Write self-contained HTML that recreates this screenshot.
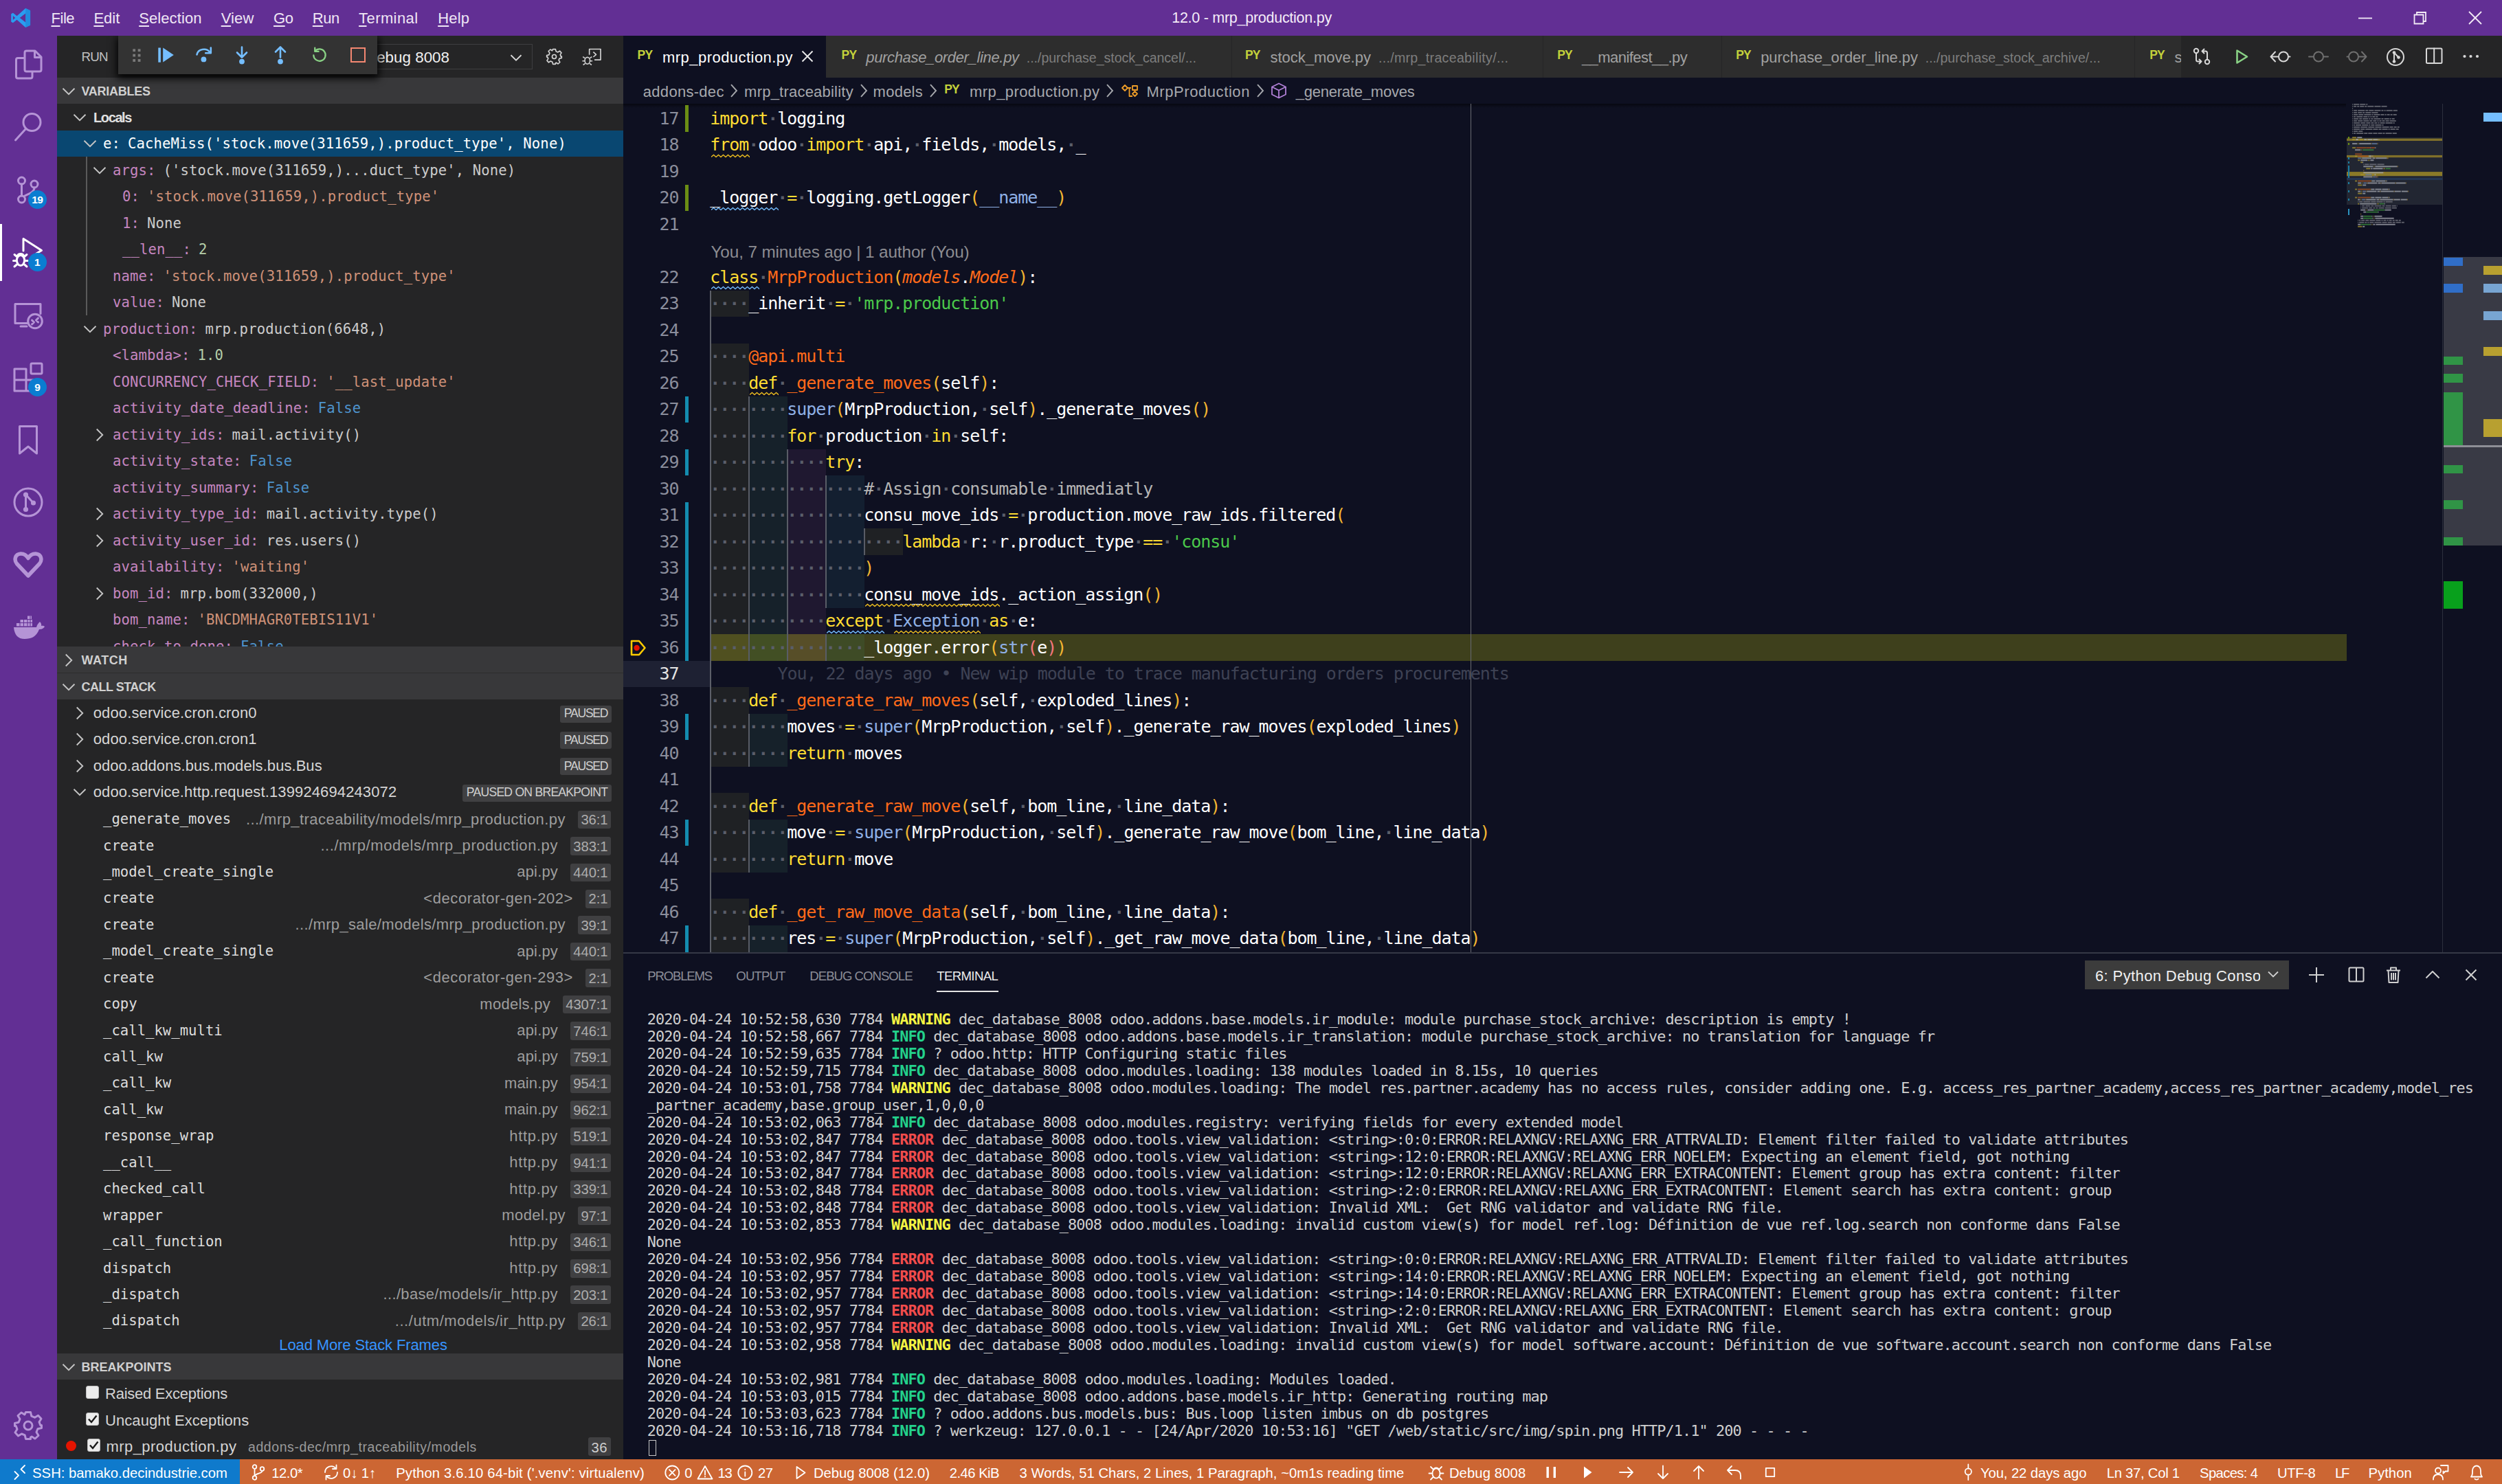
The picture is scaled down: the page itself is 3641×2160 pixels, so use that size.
<!DOCTYPE html>
<html lang="en"><head><meta charset="utf-8"><title>12.0 - mrp_production.py</title>
<style>
html,body{margin:0;padding:0;background:#0e1021;}
body{width:3641px;height:2160px;position:relative;overflow:hidden;font-family:"Liberation Sans",sans-serif;}
body div,body svg{position:absolute;box-sizing:border-box;}
div span{position:static;}
.cl{left:1033.2px;height:38px;line-height:38px;font-family:'DejaVu Sans Mono', 'Liberation Mono', monospace;font-size:25.0px;letter-spacing:-1.050px;white-space:pre;color:#fff;}
.k{color:#ffdd33}.f{color:#ff6a1a}.c{color:#ff6a1a;font-style:italic}.s{color:#4bc94b}.m{color:#b4b4b4}.b{color:#8fb0e6}.p1{color:#f2b632}.p2{color:#f4777f}.ws{color:#5a5e6a;font-weight:bold}.bl{color:#3e4254}
.ln{left:927px;width:60.5px;text-align:right;height:38px;line-height:38px;font-family:'DejaVu Sans Mono', 'Liberation Mono', monospace;font-size:25.0px;letter-spacing:-1.050px;color:#8b8e9c;white-space:pre;}
.tl{left:941.8px;height:25px;line-height:25px;font-family:'DejaVu Sans Mono', 'Liberation Mono', monospace;font-size:21.9px;letter-spacing:-0.934px;white-space:pre;color:#cfcfcf;}
.tw{color:#f5f543;font-weight:bold}.ti{color:#23d18b;font-weight:bold}.te{color:#f14c4c;font-weight:bold}
</style></head><body>
<div style="left:0px;top:0px;width:3641px;height:2160px;background:#0e1021;"></div>
<div style="left:0px;top:0px;width:3641px;height:52px;background:#622f94;"></div>
<div style="left:0px;top:52px;width:83px;height:2072px;background:#622f94;"></div>
<div style="left:83px;top:52px;width:824px;height:2072px;background:#252526;"></div>
<div style="left:907px;top:52px;width:2734px;height:61px;background:#252526;"></div>
<div style="left:0px;top:2124px;width:3641px;height:36px;background:#cc6633;"></div>
<div style="left:0px;top:2124px;width:348.6px;height:36px;background:#0f7acc;"></div>
<svg style="left:15px;top:11px;" width="30" height="30" viewBox="0 0 100 100"><path d="M74 3 L97 14 V86 L74 97 L32 59 L13 74 L4 69 V31 L13 26 L32 41 Z M74 28 L46 50 L74 72 Z M13 40 V60 L24 50 Z" fill="#2a9df0" fill-rule="evenodd"/><path d="M74 3 L97 14 V86 L74 97 Z" fill="#1a84d6" opacity="0.6"/></svg>
<div style="left:74.5px;top:10.88px;height:31px;line-height:31px;font-family:'Liberation Sans', sans-serif;font-size:22px;color:#efe6f5;white-space:pre;letter-spacing:-0.463px;"><span style="text-decoration:underline;text-underline-offset:3px;text-decoration-thickness:1.5px">F</span>ile</div>
<div style="left:136.4px;top:10.88px;height:31px;line-height:31px;font-family:'Liberation Sans', sans-serif;font-size:22px;color:#efe6f5;white-space:pre;letter-spacing:-0.005px;"><span style="text-decoration:underline;text-underline-offset:3px;text-decoration-thickness:1.5px">E</span>dit</div>
<div style="left:202.2px;top:10.88px;height:31px;line-height:31px;font-family:'Liberation Sans', sans-serif;font-size:22px;color:#efe6f5;white-space:pre;letter-spacing:0.098px;"><span style="text-decoration:underline;text-underline-offset:3px;text-decoration-thickness:1.5px">S</span>election</div>
<div style="left:321.7px;top:10.88px;height:31px;line-height:31px;font-family:'Liberation Sans', sans-serif;font-size:22px;color:#efe6f5;white-space:pre;letter-spacing:0.126px;"><span style="text-decoration:underline;text-underline-offset:3px;text-decoration-thickness:1.5px">V</span>iew</div>
<div style="left:398px;top:10.88px;height:31px;line-height:31px;font-family:'Liberation Sans', sans-serif;font-size:22px;color:#efe6f5;white-space:pre;letter-spacing:-0.430px;"><span style="text-decoration:underline;text-underline-offset:3px;text-decoration-thickness:1.5px">G</span>o</div>
<div style="left:454.8px;top:10.88px;height:31px;line-height:31px;font-family:'Liberation Sans', sans-serif;font-size:22px;color:#efe6f5;white-space:pre;letter-spacing:-0.453px;"><span style="text-decoration:underline;text-underline-offset:3px;text-decoration-thickness:1.5px">R</span>un</div>
<div style="left:522.1px;top:10.88px;height:31px;line-height:31px;font-family:'Liberation Sans', sans-serif;font-size:22px;color:#efe6f5;white-space:pre;letter-spacing:0.407px;"><span style="text-decoration:underline;text-underline-offset:3px;text-decoration-thickness:1.5px">T</span>erminal</div>
<div style="left:637.2px;top:10.88px;height:31px;line-height:31px;font-family:'Liberation Sans', sans-serif;font-size:22px;color:#efe6f5;white-space:pre;letter-spacing:0.188px;"><span style="text-decoration:underline;text-underline-offset:3px;text-decoration-thickness:1.5px">H</span>elp</div>
<div style="left:1705.2px;top:11.15px;height:30px;line-height:30px;font-family:'Liberation Sans', sans-serif;font-size:21.5px;color:#f4ecf8;white-space:pre;letter-spacing:-0.264px;">12.0 - mrp_production.py</div>
<svg style="left:3426px;top:10px;" width="32" height="32" viewBox="0 0 32 32"><path d="M6 16.5 H26" stroke="#f2eaf6" stroke-width="1.8" fill="none"/></svg>
<svg style="left:3506px;top:10px;" width="32" height="32" viewBox="0 0 32 32"><path d="M7.5 11.5 H20.5 V24.5 H7.5 Z M11 11.5 V8 H24 V21 H20.5" stroke="#f2eaf6" stroke-width="1.8" fill="none"/></svg>
<svg style="left:3586px;top:10px;" width="32" height="32" viewBox="0 0 32 32"><path d="M7 7 L25 25 M25 7 L7 25" stroke="#f2eaf6" stroke-width="1.8" fill="none"/></svg>
<svg style="left:19.5px;top:71px;" width="43" height="46" viewBox="0 0 43 46"><path d="M18.5 3 H31 L40 12 V30.5 Q40 33 37.5 33 H18.5 Q16 33 16 30.5 V5.5 Q16 3 18.5 3 Z M30.5 3.5 V12.5 H39.5" stroke="#b594d6" fill="none" stroke-width="3" stroke-linejoin="round" stroke-linecap="round"/><path d="M15.5 13.5 H6 Q3.5 13.5 3.5 16 V40.5 Q3.5 43 6 43 H24.5 Q27 43 27 40.5 V34" stroke="#b594d6" fill="none" stroke-width="3" stroke-linejoin="round" stroke-linecap="round"/></svg>
<svg style="left:18px;top:160px;" width="46" height="50" viewBox="0 0 46 50"><circle cx="28.5" cy="18" r="12.5" stroke="#b594d6" fill="none" stroke-width="3" stroke-linejoin="round" stroke-linecap="round"/><path d="M19.5 27.5 L4.5 44" stroke="#b594d6" fill="none" stroke-width="3" stroke-linejoin="round" stroke-linecap="round"/></svg>
<svg style="left:18px;top:255px;" width="46" height="50" viewBox="0 0 46 50"><circle cx="13.5" cy="8" r="5" stroke="#b594d6" fill="none" stroke-width="3" stroke-linejoin="round" stroke-linecap="round"/><circle cx="32" cy="13" r="5" stroke="#b594d6" fill="none" stroke-width="3" stroke-linejoin="round" stroke-linecap="round"/><circle cx="13.5" cy="35" r="5" stroke="#b594d6" fill="none" stroke-width="3" stroke-linejoin="round" stroke-linecap="round"/><path d="M13.5 13 V30 M32 18 C32 25 24 27 18 30" stroke="#b594d6" fill="none" stroke-width="3" stroke-linejoin="round" stroke-linecap="round"/></svg>
<div style="left:40.8px;top:276.5px;width:27px;height:27px;border-radius:50%;background:#0a7dd1;color:#fff;font:bold 15.5px 'Liberation Sans',sans-serif;line-height:27px;text-align:center;letter-spacing:-0.5px">19</div>
<div style="left:0px;top:325.5px;width:3px;height:83px;background:#ffffff;"></div>
<svg style="left:14px;top:334px;" width="52" height="60" viewBox="0 0 52 60"><path d="M20 31 V13.5 L46.5 30.5 L39 35" stroke="#ffffff" fill="none" stroke-width="3" stroke-linejoin="round" stroke-linecap="round"/><ellipse cx="16" cy="45" rx="5.6" ry="7.6" stroke="#ffffff" fill="none" stroke-width="3" stroke-linejoin="round" stroke-linecap="round" stroke-width="2.8"/><path d="M10.5 39.5 L7 36.5 M21.5 39.5 L25 36.5 M10 45.5 H5.5 M22 45.5 H26.5 M10.5 51 L7 54 M21.5 51 L25 54 M11.5 38.5 C12.5 34.5 19.5 34.5 20.5 38.5" stroke="#ffffff" fill="none" stroke-width="3" stroke-linejoin="round" stroke-linecap="round" stroke-width="2.6"/></svg>
<div style="left:40.5px;top:368px;width:27px;height:27px;border-radius:50%;background:#0a7dd1;color:#fff;font:bold 15.5px 'Liberation Sans',sans-serif;line-height:27px;text-align:center;letter-spacing:-0.5px">1</div>
<svg style="left:18px;top:438px;" width="50" height="50" viewBox="0 0 50 50"><path d="M22 32.5 H4 V4.5 H41 V18.5" stroke="#b594d6" fill="none" stroke-width="3" stroke-linejoin="round" stroke-linecap="round"/><path d="M12 37 H21" stroke="#b594d6" fill="none" stroke-width="3" stroke-linejoin="round" stroke-linecap="round"/><circle cx="33" cy="29.5" r="10.3" stroke="#b594d6" fill="none" stroke-width="3" stroke-linejoin="round" stroke-linecap="round" stroke-width="2.6"/><path d="M28.5 28 L31.5 31 L28.5 34 M37.5 25 L34.5 28 L37.5 31" stroke="#b594d6" fill="none" stroke-width="3" stroke-linejoin="round" stroke-linecap="round" stroke-width="2.2"/></svg>
<svg style="left:18px;top:526px;" width="46" height="46" viewBox="0 0 46 46"><path d="M3 11 H20 V43 H3 Z M3 27 H20 M20 27 H36 V43 H20" stroke="#b594d6" fill="none" stroke-width="3" stroke-linejoin="round" stroke-linecap="round"/><rect x="27" y="3" width="16" height="15" rx="1.5" stroke="#b594d6" fill="none" stroke-width="3" stroke-linejoin="round" stroke-linecap="round"/></svg>
<div style="left:40.8px;top:549.5px;width:27px;height:27px;border-radius:50%;background:#0a7dd1;color:#fff;font:bold 15.5px 'Liberation Sans',sans-serif;line-height:27px;text-align:center;letter-spacing:-0.5px">9</div>
<svg style="left:22px;top:616px;" width="40" height="50" viewBox="0 0 40 50"><path d="M6.5 4.5 H31.5 V44 L19 34 L6.5 44 Z" stroke="#b594d6" fill="none" stroke-width="3" stroke-linejoin="round" stroke-linecap="round"/></svg>
<svg style="left:18px;top:708px;" width="46" height="46" viewBox="0 0 46 46"><circle cx="23" cy="23" r="20" stroke="#b594d6" fill="none" stroke-width="3" stroke-linejoin="round" stroke-linecap="round"/><circle cx="19.5" cy="12" r="3.6" fill="#b594d6"/><circle cx="19.5" cy="33.5" r="3.6" fill="#b594d6"/><circle cx="30.5" cy="24" r="3.6" fill="#b594d6"/><path d="M19.5 12 V33.5 M19.5 12 L30.5 24" stroke="#b594d6" fill="none" stroke-width="3" stroke-linejoin="round" stroke-linecap="round" stroke-width="3.4"/></svg>
<svg style="left:18px;top:800px;" width="46" height="44" viewBox="0 0 46 44"><path d="M23 38 L6.5 20.5 C2 15 4 6.5 12 6 C17 5.8 21 9 23 12.5 C25 9 29 5.8 34 6 C42 6.5 44 15 39.5 20.5 Z" stroke="#b594d6" stroke-width="5.5" fill="none" stroke-linejoin="round"/></svg>
<svg style="left:18px;top:892px;" width="48" height="40" viewBox="0 0 48 40"><path d="M2 21 H35 C36 17 38 15 40 13 C42 15 42.5 17 42 19 C44 18.6 46 19 47 20 C45 23.5 42 24 39 24 C35 35 27 38 18 38 C8 38 3 32 2 21 Z" fill="#b594d6"/><path d="M6 15 H29 V19.5 H6 Z M11 10 H29 V14 H11 Z M22 4.5 H28 V9 H22 Z" fill="#b594d6"/><path d="M11 10 V19.5 M16.5 10 V19.5 M22 10 V19.5 M26 4.5 V19.5" stroke="#622f94" stroke-width="1"/></svg>
<svg style="left:19px;top:2053px;" width="44" height="44" viewBox="0 0 44 44"><circle cx="22" cy="22" r="6" stroke="#b594d6" fill="none" stroke-width="3" stroke-linejoin="round" stroke-linecap="round" stroke-width="3.2"/><path d="M18.5 2.5 H25.5 L26.8 8.2 L31.5 10.2 L36.5 7.2 L41 12 L38 16.8 L39.8 21.5 H41.5 V25.5 L35.9 26.8 L34 31.5 L37 36.5 L32 41 L27.2 38 L25.5 39 V41.5 H18.5 L17.2 35.9 L12.5 34 L7.5 37 L3 32 L6 27.2 L4.2 22.5 H2.5 V18.5 L8.1 17.2 L10 12.5 L7 7.5 L12 3 L16.8 6 Z" stroke="#b594d6" fill="none" stroke-width="3" stroke-linejoin="round" stroke-linecap="round" stroke-width="3.2"/></svg>
<div style="left:118.4px;top:70.19px;height:26px;line-height:26px;font-family:'Liberation Sans', sans-serif;font-size:18.8px;color:#c0c0c0;white-space:pre;letter-spacing:-0.701px;">RUN</div>
<div style="left:330px;top:64px;width:444.5px;height:37px;border:1.5px solid #3e3e40;"></div>
<div style="left:532px;top:67.74px;height:31px;line-height:31px;font-family:'Liberation Sans', sans-serif;font-size:22.4px;color:#f0f0f0;white-space:pre;letter-spacing:-0.002px;">Debug 8008</div>
<svg style="left:739px;top:71.8px;" width="24" height="24" viewBox="-12 -12 24 24"><path d="M-7.5 -3.75 L0 3.75 L7.5 -3.75" stroke="#d8d8d8" stroke-width="1.8" fill="none"/></svg>
<svg style="left:793.5px;top:70px;" width="25" height="25" viewBox="0 0 30 30"><circle cx="15" cy="15" r="3.6" stroke="#d4d4d4" fill="none" stroke-width="2" stroke-linejoin="round"/><path d="M12.7 2 H17.3 L18.2 5.8 L21.2 7.1 L24.6 5 L27.6 8.2 L25.5 11.5 L26.7 14.5 H28 V17.3 L24.2 18.2 L22.9 21.2 L25 24.6 L21.8 27.6 L18.5 25.5 L17.3 26 V28 H12.7 L11.8 24.2 L8.8 22.9 L5.4 25 L2.4 21.8 L4.5 18.5 L3.3 15.5 H2 V12.7 L5.8 11.8 L7.1 8.8 L5 5.4 L8.2 2.4 L11.5 4.5 Z" stroke="#d4d4d4" fill="none" stroke-width="2" stroke-linejoin="round"/></svg>
<svg style="left:847px;top:68.5px;" width="29.5" height="28" viewBox="0 0 36 34"><path d="M13 13 V3 H33 V22 H22" stroke="#d4d4d4" fill="none" stroke-width="2" stroke-linejoin="round"/><path d="M20 8 L25 12.5 L20 17" stroke="#d4d4d4" fill="none" stroke-width="2" stroke-linejoin="round" stroke-width="1.8"/><ellipse cx="9.5" cy="23.5" rx="4.6" ry="6" stroke="#d4d4d4" fill="none" stroke-width="2" stroke-linejoin="round"/><path d="M5 19 L1.5 16.5 M14 19 L17.5 16.5 M4.8 24 H0.5 M14.2 24 H18.5 M5.5 28.5 L2 31 M13.5 28.5 L17 31" stroke="#d4d4d4" fill="none" stroke-width="2" stroke-linejoin="round" stroke-width="1.7"/></svg>
<div style="left:83px;top:113px;width:824px;height:38px;background:#38383a;"></div>
<svg style="left:88px;top:120.5px;" width="24" height="24" viewBox="-12 -12 24 24"><path d="M-8.5 -4.25 L0 4.25 L8.5 -4.25" stroke="#c5c5c5" stroke-width="1.9" fill="none"/></svg>
<div style="left:118.4px;top:120.96px;height:25px;line-height:25px;font-family:'Liberation Sans', sans-serif;font-size:18px;color:#d0d0d0;white-space:pre;font-weight:bold;letter-spacing:-0.254px;">VARIABLES</div>
<svg style="left:104px;top:158.75px;" width="24" height="24" viewBox="-12 -12 24 24"><path d="M-8.5 -4.25 L0 4.25 L8.5 -4.25" stroke="#c5c5c5" stroke-width="1.9" fill="none"/></svg>
<div style="left:136px;top:157.07px;height:28px;line-height:28px;font-family:'Liberation Sans', sans-serif;font-size:20px;color:#e0e0e0;white-space:pre;font-weight:bold;letter-spacing:-1.393px;">Locals</div>
<div style="left:83px;top:189.5px;width:824px;height:38.5px;background:#094771;"></div>
<svg style="left:118.5px;top:197.25px;" width="24" height="24" viewBox="-12 -12 24 24"><path d="M-8.5 -4.25 L0 4.25 L8.5 -4.25" stroke="#c5c5c5" stroke-width="1.9" fill="none"/></svg>
<div style="left:150px;top:190.37px;height:38px;line-height:38px;font-family:'DejaVu Sans Mono', 'Liberation Mono', monospace;font-size:20.6px;color:#ccc;white-space:pre;letter-spacing:0.109px;"><span style="color:#ffffff;">e:</span><span style="color:#ffffff;margin-left:11px;">CacheMiss('stock.move(311659,).product_type', None)</span></div>
<svg style="left:132.5px;top:235.75px;" width="24" height="24" viewBox="-12 -12 24 24"><path d="M-8.5 -4.25 L0 4.25 L8.5 -4.25" stroke="#c5c5c5" stroke-width="1.9" fill="none"/></svg>
<div style="left:164px;top:228.87px;height:38px;line-height:38px;font-family:'DejaVu Sans Mono', 'Liberation Mono', monospace;font-size:20.6px;color:#ccc;white-space:pre;letter-spacing:0.109px;"><span style="color:#c586c0;">args:</span><span style="color:#cccccc;margin-left:11px;">('stock.move(311659,)...duct_type', None)</span></div>
<div style="left:178px;top:267.37px;height:38px;line-height:38px;font-family:'DejaVu Sans Mono', 'Liberation Mono', monospace;font-size:20.6px;color:#ccc;white-space:pre;letter-spacing:0.109px;"><span style="color:#c586c0;">0:</span><span style="color:#ce9178;margin-left:11px;">'stock.move(311659,).product_type'</span></div>
<div style="left:178px;top:305.87px;height:38px;line-height:38px;font-family:'DejaVu Sans Mono', 'Liberation Mono', monospace;font-size:20.6px;color:#ccc;white-space:pre;letter-spacing:0.109px;"><span style="color:#c586c0;">1:</span><span style="color:#cccccc;margin-left:11px;">None</span></div>
<div style="left:178px;top:344.37px;height:38px;line-height:38px;font-family:'DejaVu Sans Mono', 'Liberation Mono', monospace;font-size:20.6px;color:#ccc;white-space:pre;letter-spacing:0.109px;"><span style="color:#c586c0;">__len__:</span><span style="color:#b5cea8;margin-left:11px;">2</span></div>
<div style="left:164px;top:382.87px;height:38px;line-height:38px;font-family:'DejaVu Sans Mono', 'Liberation Mono', monospace;font-size:20.6px;color:#ccc;white-space:pre;letter-spacing:0.109px;"><span style="color:#c586c0;">name:</span><span style="color:#ce9178;margin-left:11px;">'stock.move(311659,).product_type'</span></div>
<div style="left:164px;top:421.37px;height:38px;line-height:38px;font-family:'DejaVu Sans Mono', 'Liberation Mono', monospace;font-size:20.6px;color:#ccc;white-space:pre;letter-spacing:0.109px;"><span style="color:#c586c0;">value:</span><span style="color:#cccccc;margin-left:11px;">None</span></div>
<svg style="left:118.5px;top:466.75px;" width="24" height="24" viewBox="-12 -12 24 24"><path d="M-8.5 -4.25 L0 4.25 L8.5 -4.25" stroke="#c5c5c5" stroke-width="1.9" fill="none"/></svg>
<div style="left:150px;top:459.87px;height:38px;line-height:38px;font-family:'DejaVu Sans Mono', 'Liberation Mono', monospace;font-size:20.6px;color:#ccc;white-space:pre;letter-spacing:0.109px;"><span style="color:#c586c0;">production:</span><span style="color:#cccccc;margin-left:11px;">mrp.production(6648,)</span></div>
<div style="left:164px;top:498.37px;height:38px;line-height:38px;font-family:'DejaVu Sans Mono', 'Liberation Mono', monospace;font-size:20.6px;color:#ccc;white-space:pre;letter-spacing:0.109px;"><span style="color:#c586c0;">&lt;lambda&gt;:</span><span style="color:#b5cea8;margin-left:11px;">1.0</span></div>
<div style="left:164px;top:536.87px;height:38px;line-height:38px;font-family:'DejaVu Sans Mono', 'Liberation Mono', monospace;font-size:20.6px;color:#ccc;white-space:pre;letter-spacing:0.109px;"><span style="color:#c586c0;">CONCURRENCY_CHECK_FIELD:</span><span style="color:#ce9178;margin-left:11px;">'__last_update'</span></div>
<div style="left:164px;top:575.37px;height:38px;line-height:38px;font-family:'DejaVu Sans Mono', 'Liberation Mono', monospace;font-size:20.6px;color:#ccc;white-space:pre;letter-spacing:0.109px;"><span style="color:#c586c0;">activity_date_deadline:</span><span style="color:#4e94ce;margin-left:11px;">False</span></div>
<svg style="left:132.5px;top:620.75px;" width="24" height="24" viewBox="-12 -12 24 24"><path d="M-4.25 -8.5 L4.25 0 L-4.25 8.5" stroke="#c5c5c5" stroke-width="1.9" fill="none"/></svg>
<div style="left:164px;top:613.87px;height:38px;line-height:38px;font-family:'DejaVu Sans Mono', 'Liberation Mono', monospace;font-size:20.6px;color:#ccc;white-space:pre;letter-spacing:0.109px;"><span style="color:#c586c0;">activity_ids:</span><span style="color:#cccccc;margin-left:11px;">mail.activity()</span></div>
<div style="left:164px;top:652.37px;height:38px;line-height:38px;font-family:'DejaVu Sans Mono', 'Liberation Mono', monospace;font-size:20.6px;color:#ccc;white-space:pre;letter-spacing:0.109px;"><span style="color:#c586c0;">activity_state:</span><span style="color:#4e94ce;margin-left:11px;">False</span></div>
<div style="left:164px;top:690.87px;height:38px;line-height:38px;font-family:'DejaVu Sans Mono', 'Liberation Mono', monospace;font-size:20.6px;color:#ccc;white-space:pre;letter-spacing:0.109px;"><span style="color:#c586c0;">activity_summary:</span><span style="color:#4e94ce;margin-left:11px;">False</span></div>
<svg style="left:132.5px;top:736.25px;" width="24" height="24" viewBox="-12 -12 24 24"><path d="M-4.25 -8.5 L4.25 0 L-4.25 8.5" stroke="#c5c5c5" stroke-width="1.9" fill="none"/></svg>
<div style="left:164px;top:729.37px;height:38px;line-height:38px;font-family:'DejaVu Sans Mono', 'Liberation Mono', monospace;font-size:20.6px;color:#ccc;white-space:pre;letter-spacing:0.109px;"><span style="color:#c586c0;">activity_type_id:</span><span style="color:#cccccc;margin-left:11px;">mail.activity.type()</span></div>
<svg style="left:132.5px;top:774.75px;" width="24" height="24" viewBox="-12 -12 24 24"><path d="M-4.25 -8.5 L4.25 0 L-4.25 8.5" stroke="#c5c5c5" stroke-width="1.9" fill="none"/></svg>
<div style="left:164px;top:767.87px;height:38px;line-height:38px;font-family:'DejaVu Sans Mono', 'Liberation Mono', monospace;font-size:20.6px;color:#ccc;white-space:pre;letter-spacing:0.109px;"><span style="color:#c586c0;">activity_user_id:</span><span style="color:#cccccc;margin-left:11px;">res.users()</span></div>
<div style="left:164px;top:806.37px;height:38px;line-height:38px;font-family:'DejaVu Sans Mono', 'Liberation Mono', monospace;font-size:20.6px;color:#ccc;white-space:pre;letter-spacing:0.109px;"><span style="color:#c586c0;">availability:</span><span style="color:#ce9178;margin-left:11px;">'waiting'</span></div>
<svg style="left:132.5px;top:851.75px;" width="24" height="24" viewBox="-12 -12 24 24"><path d="M-4.25 -8.5 L4.25 0 L-4.25 8.5" stroke="#c5c5c5" stroke-width="1.9" fill="none"/></svg>
<div style="left:164px;top:844.87px;height:38px;line-height:38px;font-family:'DejaVu Sans Mono', 'Liberation Mono', monospace;font-size:20.6px;color:#ccc;white-space:pre;letter-spacing:0.109px;"><span style="color:#c586c0;">bom_id:</span><span style="color:#cccccc;margin-left:11px;">mrp.bom(332000,)</span></div>
<div style="left:164px;top:883.37px;height:38px;line-height:38px;font-family:'DejaVu Sans Mono', 'Liberation Mono', monospace;font-size:20.6px;color:#ccc;white-space:pre;letter-spacing:0.109px;"><span style="color:#c586c0;">bom_name:</span><span style="color:#ce9178;margin-left:11px;">'BNCDMHAGR0TEBIS11V1'</span></div>
<div style="left:164px;top:921.87px;height:38px;line-height:38px;font-family:'DejaVu Sans Mono', 'Liberation Mono', monospace;font-size:20.6px;color:#ccc;white-space:pre;letter-spacing:0.109px;"><span style="color:#c586c0;">check_to_done:</span><span style="color:#4e94ce;margin-left:11px;">False</span></div>
<div style="left:125px;top:228px;width:2.2px;height:231px;background:#5a5a5a;"></div>
<div style="left:83px;top:941px;width:824px;height:38px;background:#38383a;"></div>
<svg style="left:88px;top:948.5px;" width="24" height="24" viewBox="-12 -12 24 24"><path d="M-4.25 -8.5 L4.25 0 L-4.25 8.5" stroke="#c5c5c5" stroke-width="1.9" fill="none"/></svg>
<div style="left:118.4px;top:948.96px;height:25px;line-height:25px;font-family:'Liberation Sans', sans-serif;font-size:18px;color:#d0d0d0;white-space:pre;font-weight:bold;letter-spacing:0.569px;">WATCH</div>
<div style="left:83px;top:979px;width:824px;height:1px;background:#2c2c2d;"></div>
<div style="left:83px;top:980px;width:824px;height:38px;background:#38383a;"></div>
<svg style="left:88px;top:987.5px;" width="24" height="24" viewBox="-12 -12 24 24"><path d="M-8.5 -4.25 L0 4.25 L8.5 -4.25" stroke="#c5c5c5" stroke-width="1.9" fill="none"/></svg>
<div style="left:118.4px;top:987.96px;height:25px;line-height:25px;font-family:'Liberation Sans', sans-serif;font-size:18px;color:#d0d0d0;white-space:pre;font-weight:bold;letter-spacing:-0.483px;">CALL STACK</div>
<svg style="left:104px;top:1025.75px;" width="24" height="24" viewBox="-12 -12 24 24"><path d="M-4.25 -8.5 L4.25 0 L-4.25 8.5" stroke="#c5c5c5" stroke-width="1.9" fill="none"/></svg>
<div style="left:135.7px;top:1021.68px;height:31px;line-height:31px;font-family:'Liberation Sans', sans-serif;font-size:22px;color:#d6d6d6;white-space:pre;letter-spacing:0.139px;">odoo.service.cron.cron0</div>
<div style="left:814.8px;top:1026.5px;width:75px;height:25px;background:#404042;border-radius:3px;"></div>
<div style="left:820.8px;top:1026.20px;height:25px;line-height:25px;font-family:'Liberation Sans', sans-serif;font-size:17.6px;color:#d0d0d0;white-space:pre;letter-spacing:-1.258px;">PAUSED</div>
<svg style="left:104px;top:1064.18px;" width="24" height="24" viewBox="-12 -12 24 24"><path d="M-4.25 -8.5 L4.25 0 L-4.25 8.5" stroke="#c5c5c5" stroke-width="1.9" fill="none"/></svg>
<div style="left:135.7px;top:1060.11px;height:31px;line-height:31px;font-family:'Liberation Sans', sans-serif;font-size:22px;color:#d6d6d6;white-space:pre;letter-spacing:0.139px;">odoo.service.cron.cron1</div>
<div style="left:814.8px;top:1064.93px;width:75px;height:25px;background:#404042;border-radius:3px;"></div>
<div style="left:820.8px;top:1064.63px;height:25px;line-height:25px;font-family:'Liberation Sans', sans-serif;font-size:17.6px;color:#d0d0d0;white-space:pre;letter-spacing:-1.258px;">PAUSED</div>
<svg style="left:104px;top:1102.61px;" width="24" height="24" viewBox="-12 -12 24 24"><path d="M-4.25 -8.5 L4.25 0 L-4.25 8.5" stroke="#c5c5c5" stroke-width="1.9" fill="none"/></svg>
<div style="left:135.7px;top:1098.54px;height:31px;line-height:31px;font-family:'Liberation Sans', sans-serif;font-size:22px;color:#d6d6d6;white-space:pre;letter-spacing:0.052px;">odoo.addons.bus.models.bus.Bus</div>
<div style="left:814.8px;top:1103.36px;width:75px;height:25px;background:#404042;border-radius:3px;"></div>
<div style="left:820.8px;top:1103.06px;height:25px;line-height:25px;font-family:'Liberation Sans', sans-serif;font-size:17.6px;color:#d0d0d0;white-space:pre;letter-spacing:-1.258px;">PAUSED</div>
<svg style="left:104px;top:1141.04px;" width="24" height="24" viewBox="-12 -12 24 24"><path d="M-8.5 -4.25 L0 4.25 L8.5 -4.25" stroke="#c5c5c5" stroke-width="1.9" fill="none"/></svg>
<div style="left:135.7px;top:1136.97px;height:31px;line-height:31px;font-family:'Liberation Sans', sans-serif;font-size:22px;color:#d6d6d6;white-space:pre;letter-spacing:0.120px;">odoo.service.http.request.139924694243072</div>
<div style="left:672.8px;top:1141.79px;width:217px;height:25px;background:#404042;border-radius:3px;"></div>
<div style="left:678.8px;top:1141.49px;height:25px;line-height:25px;font-family:'Liberation Sans', sans-serif;font-size:17.6px;color:#d0d0d0;white-space:pre;letter-spacing:-0.756px;">PAUSED ON BREAKPOINT</div>
<div style="left:150px;top:1173.19px;height:38px;line-height:38px;font-family:'DejaVu Sans Mono', 'Liberation Mono', monospace;font-size:20.6px;color:#dcdcdc;white-space:pre;letter-spacing:0.009px;">_generate_moves</div>
<div style="left:840.98px;top:1179.72px;width:47.72px;height:26.5px;background:#404042;border-radius:3px;"></div>
<div style="right:2756.5px;top:1179.09px;height:28px;line-height:28px;font-family:'Liberation Sans', sans-serif;font-size:20.3px;color:#adadad;white-space:pre;letter-spacing:-0.091px;">36:1</div>
<div style="right:2818.02px;top:1176.60px;height:31px;line-height:31px;font-family:'Liberation Sans', sans-serif;font-size:22px;color:#9d9d9d;white-space:pre;letter-spacing:0.445px;">.../mrp_traceability/models/mrp_production.py</div>
<div style="left:150px;top:1211.62px;height:38px;line-height:38px;font-family:'DejaVu Sans Mono', 'Liberation Mono', monospace;font-size:20.6px;color:#dcdcdc;white-space:pre;letter-spacing:0.009px;">create</div>
<div style="left:829.95px;top:1218.15px;width:58.75px;height:26.5px;background:#404042;border-radius:3px;"></div>
<div style="right:2756.5px;top:1217.52px;height:28px;line-height:28px;font-family:'Liberation Sans', sans-serif;font-size:20.3px;color:#adadad;white-space:pre;letter-spacing:-0.123px;">383:1</div>
<div style="right:2829.05px;top:1215.03px;height:31px;line-height:31px;font-family:'Liberation Sans', sans-serif;font-size:22px;color:#9d9d9d;white-space:pre;letter-spacing:0.559px;">.../mrp/models/mrp_production.py</div>
<div style="left:150px;top:1250.05px;height:38px;line-height:38px;font-family:'DejaVu Sans Mono', 'Liberation Mono', monospace;font-size:20.6px;color:#dcdcdc;white-space:pre;letter-spacing:0.009px;">_model_create_single</div>
<div style="left:829.95px;top:1256.58px;width:58.75px;height:26.5px;background:#404042;border-radius:3px;"></div>
<div style="right:2756.5px;top:1255.95px;height:28px;line-height:28px;font-family:'Liberation Sans', sans-serif;font-size:20.3px;color:#adadad;white-space:pre;letter-spacing:-0.123px;">440:1</div>
<div style="right:2829.05px;top:1253.46px;height:31px;line-height:31px;font-family:'Liberation Sans', sans-serif;font-size:22px;color:#9d9d9d;white-space:pre;letter-spacing:0.147px;">api.py</div>
<div style="left:150px;top:1288.48px;height:38px;line-height:38px;font-family:'DejaVu Sans Mono', 'Liberation Mono', monospace;font-size:20.6px;color:#dcdcdc;white-space:pre;letter-spacing:0.009px;">create</div>
<div style="left:852.01px;top:1295.01px;width:36.69px;height:26.5px;background:#404042;border-radius:3px;"></div>
<div style="right:2756.5px;top:1294.38px;height:28px;line-height:28px;font-family:'Liberation Sans', sans-serif;font-size:20.3px;color:#adadad;white-space:pre;letter-spacing:-0.038px;">2:1</div>
<div style="right:2806.99px;top:1291.89px;height:31px;line-height:31px;font-family:'Liberation Sans', sans-serif;font-size:22px;color:#9d9d9d;white-space:pre;letter-spacing:0.579px;">&lt;decorator-gen-202&gt;</div>
<div style="left:150px;top:1326.91px;height:38px;line-height:38px;font-family:'DejaVu Sans Mono', 'Liberation Mono', monospace;font-size:20.6px;color:#dcdcdc;white-space:pre;letter-spacing:0.009px;">create</div>
<div style="left:840.98px;top:1333.44px;width:47.72px;height:26.5px;background:#404042;border-radius:3px;"></div>
<div style="right:2756.5px;top:1332.81px;height:28px;line-height:28px;font-family:'Liberation Sans', sans-serif;font-size:20.3px;color:#adadad;white-space:pre;letter-spacing:-0.091px;">39:1</div>
<div style="right:2818.02px;top:1330.32px;height:31px;line-height:31px;font-family:'Liberation Sans', sans-serif;font-size:22px;color:#9d9d9d;white-space:pre;letter-spacing:0.354px;">.../mrp_sale/models/mrp_production.py</div>
<div style="left:150px;top:1365.34px;height:38px;line-height:38px;font-family:'DejaVu Sans Mono', 'Liberation Mono', monospace;font-size:20.6px;color:#dcdcdc;white-space:pre;letter-spacing:0.009px;">_model_create_single</div>
<div style="left:829.95px;top:1371.87px;width:58.75px;height:26.5px;background:#404042;border-radius:3px;"></div>
<div style="right:2756.5px;top:1371.24px;height:28px;line-height:28px;font-family:'Liberation Sans', sans-serif;font-size:20.3px;color:#adadad;white-space:pre;letter-spacing:-0.123px;">440:1</div>
<div style="right:2829.05px;top:1368.75px;height:31px;line-height:31px;font-family:'Liberation Sans', sans-serif;font-size:22px;color:#9d9d9d;white-space:pre;letter-spacing:0.147px;">api.py</div>
<div style="left:150px;top:1403.77px;height:38px;line-height:38px;font-family:'DejaVu Sans Mono', 'Liberation Mono', monospace;font-size:20.6px;color:#dcdcdc;white-space:pre;letter-spacing:0.009px;">create</div>
<div style="left:852.01px;top:1410.3px;width:36.69px;height:26.5px;background:#404042;border-radius:3px;"></div>
<div style="right:2756.5px;top:1409.67px;height:28px;line-height:28px;font-family:'Liberation Sans', sans-serif;font-size:20.3px;color:#adadad;white-space:pre;letter-spacing:-0.038px;">2:1</div>
<div style="right:2806.99px;top:1407.18px;height:31px;line-height:31px;font-family:'Liberation Sans', sans-serif;font-size:22px;color:#9d9d9d;white-space:pre;letter-spacing:0.579px;">&lt;decorator-gen-293&gt;</div>
<div style="left:150px;top:1442.20px;height:38px;line-height:38px;font-family:'DejaVu Sans Mono', 'Liberation Mono', monospace;font-size:20.6px;color:#dcdcdc;white-space:pre;letter-spacing:0.009px;">copy</div>
<div style="left:818.92px;top:1448.73px;width:69.78px;height:26.5px;background:#404042;border-radius:3px;"></div>
<div style="right:2756.5px;top:1448.10px;height:28px;line-height:28px;font-family:'Liberation Sans', sans-serif;font-size:20.3px;color:#adadad;white-space:pre;letter-spacing:-0.144px;">4307:1</div>
<div style="right:2840.08px;top:1445.61px;height:31px;line-height:31px;font-family:'Liberation Sans', sans-serif;font-size:22px;color:#9d9d9d;white-space:pre;letter-spacing:0.258px;">models.py</div>
<div style="left:150px;top:1480.63px;height:38px;line-height:38px;font-family:'DejaVu Sans Mono', 'Liberation Mono', monospace;font-size:20.6px;color:#dcdcdc;white-space:pre;letter-spacing:0.009px;">_call_kw_multi</div>
<div style="left:829.95px;top:1487.16px;width:58.75px;height:26.5px;background:#404042;border-radius:3px;"></div>
<div style="right:2756.5px;top:1486.53px;height:28px;line-height:28px;font-family:'Liberation Sans', sans-serif;font-size:20.3px;color:#adadad;white-space:pre;letter-spacing:-0.123px;">746:1</div>
<div style="right:2829.05px;top:1484.04px;height:31px;line-height:31px;font-family:'Liberation Sans', sans-serif;font-size:22px;color:#9d9d9d;white-space:pre;letter-spacing:0.147px;">api.py</div>
<div style="left:150px;top:1519.06px;height:38px;line-height:38px;font-family:'DejaVu Sans Mono', 'Liberation Mono', monospace;font-size:20.6px;color:#dcdcdc;white-space:pre;letter-spacing:0.009px;">call_kw</div>
<div style="left:829.95px;top:1525.59px;width:58.75px;height:26.5px;background:#404042;border-radius:3px;"></div>
<div style="right:2756.5px;top:1524.96px;height:28px;line-height:28px;font-family:'Liberation Sans', sans-serif;font-size:20.3px;color:#adadad;white-space:pre;letter-spacing:-0.123px;">759:1</div>
<div style="right:2829.05px;top:1522.47px;height:31px;line-height:31px;font-family:'Liberation Sans', sans-serif;font-size:22px;color:#9d9d9d;white-space:pre;letter-spacing:0.147px;">api.py</div>
<div style="left:150px;top:1557.49px;height:38px;line-height:38px;font-family:'DejaVu Sans Mono', 'Liberation Mono', monospace;font-size:20.6px;color:#dcdcdc;white-space:pre;letter-spacing:0.009px;">_call_kw</div>
<div style="left:829.95px;top:1564.02px;width:58.75px;height:26.5px;background:#404042;border-radius:3px;"></div>
<div style="right:2756.5px;top:1563.39px;height:28px;line-height:28px;font-family:'Liberation Sans', sans-serif;font-size:20.3px;color:#adadad;white-space:pre;letter-spacing:-0.123px;">954:1</div>
<div style="right:2829.05px;top:1560.90px;height:31px;line-height:31px;font-family:'Liberation Sans', sans-serif;font-size:22px;color:#9d9d9d;white-space:pre;letter-spacing:0.136px;">main.py</div>
<div style="left:150px;top:1595.92px;height:38px;line-height:38px;font-family:'DejaVu Sans Mono', 'Liberation Mono', monospace;font-size:20.6px;color:#dcdcdc;white-space:pre;letter-spacing:0.009px;">call_kw</div>
<div style="left:829.95px;top:1602.45px;width:58.75px;height:26.5px;background:#404042;border-radius:3px;"></div>
<div style="right:2756.5px;top:1601.82px;height:28px;line-height:28px;font-family:'Liberation Sans', sans-serif;font-size:20.3px;color:#adadad;white-space:pre;letter-spacing:-0.123px;">962:1</div>
<div style="right:2829.05px;top:1599.33px;height:31px;line-height:31px;font-family:'Liberation Sans', sans-serif;font-size:22px;color:#9d9d9d;white-space:pre;letter-spacing:0.136px;">main.py</div>
<div style="left:150px;top:1634.35px;height:38px;line-height:38px;font-family:'DejaVu Sans Mono', 'Liberation Mono', monospace;font-size:20.6px;color:#dcdcdc;white-space:pre;letter-spacing:0.009px;">response_wrap</div>
<div style="left:829.95px;top:1640.88px;width:58.75px;height:26.5px;background:#404042;border-radius:3px;"></div>
<div style="right:2756.5px;top:1640.25px;height:28px;line-height:28px;font-family:'Liberation Sans', sans-serif;font-size:20.3px;color:#adadad;white-space:pre;letter-spacing:-0.123px;">519:1</div>
<div style="right:2829.05px;top:1637.76px;height:31px;line-height:31px;font-family:'Liberation Sans', sans-serif;font-size:22px;color:#9d9d9d;white-space:pre;letter-spacing:0.650px;">http.py</div>
<div style="left:150px;top:1672.78px;height:38px;line-height:38px;font-family:'DejaVu Sans Mono', 'Liberation Mono', monospace;font-size:20.6px;color:#dcdcdc;white-space:pre;letter-spacing:0.009px;">__call__</div>
<div style="left:829.95px;top:1679.31px;width:58.75px;height:26.5px;background:#404042;border-radius:3px;"></div>
<div style="right:2756.5px;top:1678.68px;height:28px;line-height:28px;font-family:'Liberation Sans', sans-serif;font-size:20.3px;color:#adadad;white-space:pre;letter-spacing:-0.123px;">941:1</div>
<div style="right:2829.05px;top:1676.19px;height:31px;line-height:31px;font-family:'Liberation Sans', sans-serif;font-size:22px;color:#9d9d9d;white-space:pre;letter-spacing:0.650px;">http.py</div>
<div style="left:150px;top:1711.21px;height:38px;line-height:38px;font-family:'DejaVu Sans Mono', 'Liberation Mono', monospace;font-size:20.6px;color:#dcdcdc;white-space:pre;letter-spacing:0.009px;">checked_call</div>
<div style="left:829.95px;top:1717.74px;width:58.75px;height:26.5px;background:#404042;border-radius:3px;"></div>
<div style="right:2756.5px;top:1717.11px;height:28px;line-height:28px;font-family:'Liberation Sans', sans-serif;font-size:20.3px;color:#adadad;white-space:pre;letter-spacing:-0.123px;">339:1</div>
<div style="right:2829.05px;top:1714.62px;height:31px;line-height:31px;font-family:'Liberation Sans', sans-serif;font-size:22px;color:#9d9d9d;white-space:pre;letter-spacing:0.650px;">http.py</div>
<div style="left:150px;top:1749.64px;height:38px;line-height:38px;font-family:'DejaVu Sans Mono', 'Liberation Mono', monospace;font-size:20.6px;color:#dcdcdc;white-space:pre;letter-spacing:0.009px;">wrapper</div>
<div style="left:840.98px;top:1756.17px;width:47.72px;height:26.5px;background:#404042;border-radius:3px;"></div>
<div style="right:2756.5px;top:1755.54px;height:28px;line-height:28px;font-family:'Liberation Sans', sans-serif;font-size:20.3px;color:#adadad;white-space:pre;letter-spacing:-0.091px;">97:1</div>
<div style="right:2818.02px;top:1753.05px;height:31px;line-height:31px;font-family:'Liberation Sans', sans-serif;font-size:22px;color:#9d9d9d;white-space:pre;letter-spacing:0.427px;">model.py</div>
<div style="left:150px;top:1788.07px;height:38px;line-height:38px;font-family:'DejaVu Sans Mono', 'Liberation Mono', monospace;font-size:20.6px;color:#dcdcdc;white-space:pre;letter-spacing:0.009px;">_call_function</div>
<div style="left:829.95px;top:1794.6px;width:58.75px;height:26.5px;background:#404042;border-radius:3px;"></div>
<div style="right:2756.5px;top:1793.97px;height:28px;line-height:28px;font-family:'Liberation Sans', sans-serif;font-size:20.3px;color:#adadad;white-space:pre;letter-spacing:-0.123px;">346:1</div>
<div style="right:2829.05px;top:1791.48px;height:31px;line-height:31px;font-family:'Liberation Sans', sans-serif;font-size:22px;color:#9d9d9d;white-space:pre;letter-spacing:0.650px;">http.py</div>
<div style="left:150px;top:1826.50px;height:38px;line-height:38px;font-family:'DejaVu Sans Mono', 'Liberation Mono', monospace;font-size:20.6px;color:#dcdcdc;white-space:pre;letter-spacing:0.009px;">dispatch</div>
<div style="left:829.95px;top:1833.03px;width:58.75px;height:26.5px;background:#404042;border-radius:3px;"></div>
<div style="right:2756.5px;top:1832.40px;height:28px;line-height:28px;font-family:'Liberation Sans', sans-serif;font-size:20.3px;color:#adadad;white-space:pre;letter-spacing:-0.123px;">698:1</div>
<div style="right:2829.05px;top:1829.91px;height:31px;line-height:31px;font-family:'Liberation Sans', sans-serif;font-size:22px;color:#9d9d9d;white-space:pre;letter-spacing:0.650px;">http.py</div>
<div style="left:150px;top:1864.93px;height:38px;line-height:38px;font-family:'DejaVu Sans Mono', 'Liberation Mono', monospace;font-size:20.6px;color:#dcdcdc;white-space:pre;letter-spacing:0.009px;">_dispatch</div>
<div style="left:829.95px;top:1871.46px;width:58.75px;height:26.5px;background:#404042;border-radius:3px;"></div>
<div style="right:2756.5px;top:1870.83px;height:28px;line-height:28px;font-family:'Liberation Sans', sans-serif;font-size:20.3px;color:#adadad;white-space:pre;letter-spacing:-0.123px;">203:1</div>
<div style="right:2829.05px;top:1868.34px;height:31px;line-height:31px;font-family:'Liberation Sans', sans-serif;font-size:22px;color:#9d9d9d;white-space:pre;letter-spacing:0.331px;">.../base/models/ir_http.py</div>
<div style="left:150px;top:1903.36px;height:38px;line-height:38px;font-family:'DejaVu Sans Mono', 'Liberation Mono', monospace;font-size:20.6px;color:#dcdcdc;white-space:pre;letter-spacing:0.009px;">_dispatch</div>
<div style="left:840.98px;top:1909.89px;width:47.72px;height:26.5px;background:#404042;border-radius:3px;"></div>
<div style="right:2756.5px;top:1909.26px;height:28px;line-height:28px;font-family:'Liberation Sans', sans-serif;font-size:20.3px;color:#adadad;white-space:pre;letter-spacing:-0.091px;">26:1</div>
<div style="right:2818.02px;top:1906.77px;height:31px;line-height:31px;font-family:'Liberation Sans', sans-serif;font-size:22px;color:#9d9d9d;white-space:pre;letter-spacing:0.537px;">.../utm/models/ir_http.py</div>
<div style="left:406.3px;top:1941.88px;height:31px;line-height:31px;font-family:'Liberation Sans', sans-serif;font-size:22px;color:#3794ff;white-space:pre;letter-spacing:-0.113px;">Load More Stack Frames</div>
<div style="left:83px;top:1970px;width:824px;height:38px;background:#38383a;"></div>
<svg style="left:88px;top:1977.5px;" width="24" height="24" viewBox="-12 -12 24 24"><path d="M-8.5 -4.25 L0 4.25 L8.5 -4.25" stroke="#c5c5c5" stroke-width="1.9" fill="none"/></svg>
<div style="left:118.4px;top:1977.96px;height:25px;line-height:25px;font-family:'Liberation Sans', sans-serif;font-size:18px;color:#d0d0d0;white-space:pre;font-weight:bold;letter-spacing:-0.001px;">BREAKPOINTS</div>
<div style="left:83px;top:2008px;width:824px;height:116px;background:#252526;"></div>
<div style="left:125px;top:2016.5px;width:19px;height:19px;background:#ececec;border-radius:3px;border:1px solid #bdbdbd;"></div>
<div style="left:153px;top:2013.48px;height:31px;line-height:31px;font-family:'Liberation Sans', sans-serif;font-size:22px;color:#d4d4d4;white-space:pre;letter-spacing:-0.248px;">Raised Exceptions</div>
<div style="left:125px;top:2055.7px;width:19px;height:19px;background:#ececec;border-radius:3px;border:1px solid #bdbdbd;"></div>
<svg style="left:125px;top:2055.7px;" width="19" height="19" viewBox="0 0 19 19"><path d="M4 9.5 L8 14 L15.5 4.5" stroke="#1a1a1a" stroke-width="2.4" fill="none"/></svg>
<div style="left:153px;top:2052.08px;height:31px;line-height:31px;font-family:'Liberation Sans', sans-serif;font-size:22px;color:#d4d4d4;white-space:pre;letter-spacing:0.068px;">Uncaught Exceptions</div>
<div style="left:96.2px;top:2096.8px;width:15px;height:15px;border-radius:50%;background:#e51400"></div>
<div style="left:127px;top:2094px;width:19px;height:19px;background:#ececec;border-radius:3px;border:1px solid #bdbdbd;"></div>
<svg style="left:127px;top:2094px;" width="19" height="19" viewBox="0 0 19 19"><path d="M4 9.5 L8 14 L15.5 4.5" stroke="#1a1a1a" stroke-width="2.4" fill="none"/></svg>
<div style="left:154.4px;top:2090.38px;height:31px;line-height:31px;font-family:'Liberation Sans', sans-serif;font-size:22px;color:#d4d4d4;white-space:pre;letter-spacing:0.464px;">mrp_production.py</div>
<div style="left:361px;top:2092.74px;height:27px;line-height:27px;font-family:'Liberation Sans', sans-serif;font-size:19.5px;color:#9a9a9a;white-space:pre;letter-spacing:0.578px;">addons-dec/mrp_traceability/models</div>
<div style="left:855.6px;top:2091.8px;width:33.1px;height:27.2px;background:#404042;border-radius:3px;"></div>
<div style="left:860.5px;top:2092.77px;height:28px;line-height:28px;font-family:'Liberation Sans', sans-serif;font-size:20.3px;color:#cfcfcf;white-space:pre;letter-spacing:0.369px;">36</div>
<div style="left:100px;top:52px;width:600px;height:90px;overflow:hidden;"><div style="left:72px;top:0;width:377px;height:56px;background:#333333;box-shadow:0 4px 11px 2px rgba(0,0,0,0.95);"></div></div>
<svg style="left:0px;top:0px;left:0;top:0;" width="400" height="110" viewBox="0 0 400 110"><rect x="193.29999999999998" y="71.3" width="3.8" height="3.8" fill="#7a7a7a"/><rect x="193.29999999999998" y="78.69999999999999" width="3.8" height="3.8" fill="#7a7a7a"/><rect x="193.29999999999998" y="86.1" width="3.8" height="3.8" fill="#7a7a7a"/><rect x="200.7" y="71.3" width="3.8" height="3.8" fill="#7a7a7a"/><rect x="200.7" y="78.69999999999999" width="3.8" height="3.8" fill="#7a7a7a"/><rect x="200.7" y="86.1" width="3.8" height="3.8" fill="#7a7a7a"/></svg>
<svg style="left:226px;top:66px;" width="32" height="28" viewBox="0 0 32 28"><rect x="4.3" y="3.5" width="3.6" height="21.2" fill="#75beff"/><path d="M11.2 3.6 L26.8 14 L11.2 24.4 Z" fill="#75beff"/></svg>
<svg style="left:282px;top:64px;" width="30" height="32" viewBox="0 0 30 32"><path d="M4.5 15.5 C6 7.5 18 4.5 24 12.5" stroke="#75beff" fill="none" stroke-width="2.6" stroke-linecap="round" stroke-linejoin="round"/><path d="M24.8 5.5 V13.2 H17.2" stroke="#75beff" fill="none" stroke-width="2.6" stroke-linecap="round" stroke-linejoin="round"/><circle cx="14.4" cy="22.4" r="3.9" fill="#75beff"/></svg>
<svg style="left:338px;top:64px;" width="28" height="34" viewBox="0 0 28 34"><path d="M14 4.5 V19 M7 12.5 L14 19.5 L21 12.5" stroke="#75beff" fill="none" stroke-width="2.6" stroke-linecap="round" stroke-linejoin="round"/><circle cx="14" cy="25.6" r="3.9" fill="#75beff"/></svg>
<svg style="left:394px;top:64px;" width="28" height="34" viewBox="0 0 28 34"><path d="M14 19.5 V5 M7 11.5 L14 4.5 L21 11.5" stroke="#75beff" fill="none" stroke-width="2.6" stroke-linecap="round" stroke-linejoin="round"/><circle cx="14" cy="25.6" r="3.9" fill="#75beff"/></svg>
<svg style="left:452px;top:67px;" width="26" height="26" viewBox="0 0 30 30"><path d="M7.5 8.5 A10 10 0 1 1 5 15.5" stroke="#89d185" fill="none" stroke-width="2.6" stroke-linecap="round"/><path d="M7.2 3 V9.2 H13.4" stroke="#89d185" fill="none" stroke-width="2.6" stroke-linecap="round" stroke-linejoin="round"/></svg>
<div style="left:510px;top:69.3px;width:21.7px;height:21.3px;border:2.6px solid #f48771;"></div>
<div style="left:907px;top:151px;width:2507px;height:6px;background:linear-gradient(#070811,rgba(7,8,17,0));"></div>
<div style="left:1033.5px;top:923.2px;width:2381.3px;height:38.5px;background:#3e401c;"></div>
<div style="left:907px;top:961.7px;width:126px;height:38.5px;background:#1e2133;"></div>
<div style="left:1033.7px;top:422.7px;width:56px;height:38.5px;background:#1f2124;"></div>
<div style="left:1033.7px;top:499.7px;width:56px;height:38.5px;background:#1f2124;"></div>
<div style="left:1033.7px;top:538.2px;width:56px;height:38.5px;background:#1f2124;"></div>
<div style="left:1033.7px;top:576.7px;width:56px;height:38.5px;background:#1f2124;"></div>
<div style="left:1089.7px;top:576.7px;width:56px;height:38.5px;background:#16212a;"></div>
<div style="left:1033.7px;top:615.2px;width:56px;height:38.5px;background:#1f2124;"></div>
<div style="left:1089.7px;top:615.2px;width:56px;height:38.5px;background:#16212a;"></div>
<div style="left:1033.7px;top:653.7px;width:56px;height:38.5px;background:#1f2124;"></div>
<div style="left:1089.7px;top:653.7px;width:56px;height:38.5px;background:#16212a;"></div>
<div style="left:1145.7px;top:653.7px;width:56px;height:38.5px;background:#1f1830;"></div>
<div style="left:1033.7px;top:692.2px;width:56px;height:38.5px;background:#1f2124;"></div>
<div style="left:1089.7px;top:692.2px;width:56px;height:38.5px;background:#16212a;"></div>
<div style="left:1145.7px;top:692.2px;width:56px;height:38.5px;background:#1f1830;"></div>
<div style="left:1201.7px;top:692.2px;width:56px;height:38.5px;background:#131f30;"></div>
<div style="left:1033.7px;top:730.7px;width:56px;height:38.5px;background:#1f2124;"></div>
<div style="left:1089.7px;top:730.7px;width:56px;height:38.5px;background:#16212a;"></div>
<div style="left:1145.7px;top:730.7px;width:56px;height:38.5px;background:#1f1830;"></div>
<div style="left:1201.7px;top:730.7px;width:56px;height:38.5px;background:#131f30;"></div>
<div style="left:1033.7px;top:769.2px;width:56px;height:38.5px;background:#1f2124;"></div>
<div style="left:1089.7px;top:769.2px;width:56px;height:38.5px;background:#16212a;"></div>
<div style="left:1145.7px;top:769.2px;width:56px;height:38.5px;background:#1f1830;"></div>
<div style="left:1201.7px;top:769.2px;width:56px;height:38.5px;background:#131f30;"></div>
<div style="left:1257.7px;top:769.2px;width:56px;height:38.5px;background:#1f2124;"></div>
<div style="left:1033.7px;top:807.7px;width:56px;height:38.5px;background:#1f2124;"></div>
<div style="left:1089.7px;top:807.7px;width:56px;height:38.5px;background:#16212a;"></div>
<div style="left:1145.7px;top:807.7px;width:56px;height:38.5px;background:#1f1830;"></div>
<div style="left:1201.7px;top:807.7px;width:56px;height:38.5px;background:#131f30;"></div>
<div style="left:1033.7px;top:846.2px;width:56px;height:38.5px;background:#1f2124;"></div>
<div style="left:1089.7px;top:846.2px;width:56px;height:38.5px;background:#16212a;"></div>
<div style="left:1145.7px;top:846.2px;width:56px;height:38.5px;background:#1f1830;"></div>
<div style="left:1201.7px;top:846.2px;width:56px;height:38.5px;background:#131f30;"></div>
<div style="left:1033.7px;top:884.7px;width:56px;height:38.5px;background:#1f2124;"></div>
<div style="left:1089.7px;top:884.7px;width:56px;height:38.5px;background:#16212a;"></div>
<div style="left:1145.7px;top:884.7px;width:56px;height:38.5px;background:#1f1830;"></div>
<div style="left:1033.7px;top:923.2px;width:56px;height:38.5px;background:#505020;"></div>
<div style="left:1089.7px;top:923.2px;width:56px;height:38.5px;background:#424f24;"></div>
<div style="left:1145.7px;top:923.2px;width:56px;height:38.5px;background:#574e28;"></div>
<div style="left:1201.7px;top:923.2px;width:56px;height:38.5px;background:#3e4b26;"></div>
<div style="left:1033.7px;top:1000.2px;width:56px;height:38.5px;background:#1f2124;"></div>
<div style="left:1033.7px;top:1038.7px;width:56px;height:38.5px;background:#1f2124;"></div>
<div style="left:1089.7px;top:1038.7px;width:56px;height:38.5px;background:#16212a;"></div>
<div style="left:1033.7px;top:1077.2px;width:56px;height:38.5px;background:#1f2124;"></div>
<div style="left:1089.7px;top:1077.2px;width:56px;height:38.5px;background:#16212a;"></div>
<div style="left:1033.7px;top:1154.2px;width:56px;height:38.5px;background:#1f2124;"></div>
<div style="left:1033.7px;top:1192.7px;width:56px;height:38.5px;background:#1f2124;"></div>
<div style="left:1089.7px;top:1192.7px;width:56px;height:38.5px;background:#16212a;"></div>
<div style="left:1033.7px;top:1231.2px;width:56px;height:38.5px;background:#1f2124;"></div>
<div style="left:1089.7px;top:1231.2px;width:56px;height:38.5px;background:#16212a;"></div>
<div style="left:1033.7px;top:1308.2px;width:56px;height:38.5px;background:#1f2124;"></div>
<div style="left:1033.7px;top:1346.7px;width:56px;height:38.5px;background:#1f2124;"></div>
<div style="left:1089.7px;top:1346.7px;width:56px;height:38.5px;background:#16212a;"></div>
<div style="left:1033.7px;top:1385.2px;width:56px;height:1.2px;background:#1f2124;"></div>
<div style="left:1089.7px;top:1385.2px;width:56px;height:1.2px;background:#16212a;"></div>
<div style="left:997px;top:1385.2px;width:5px;height:1.2px;background:#148caf;"></div>
<div style="left:1033.3px;top:422.7px;width:1.9px;height:962.5px;background:#5c5f68;"></div>
<div style="left:1033.3px;top:1385.2px;width:1.9px;height:1.2px;background:#5c5f68;"></div>
<div style="left:1089.3px;top:1385.2px;width:1.9px;height:1.2px;background:#585c66;"></div>
<div style="left:1089.3px;top:576.7px;width:1.9px;height:385px;background:#585c66;"></div>
<div style="left:1089.3px;top:1038.7px;width:1.9px;height:77px;background:#585c66;"></div>
<div style="left:1089.3px;top:1192.7px;width:1.9px;height:77px;background:#585c66;"></div>
<div style="left:1089.3px;top:1346.7px;width:1.9px;height:38.5px;background:#585c66;"></div>
<div style="left:1145.3px;top:653.7px;width:1.9px;height:308px;background:#585c66;"></div>
<div style="left:1201.3px;top:692.2px;width:1.9px;height:192.5px;background:#585c66;"></div>
<div style="left:1201.3px;top:923.2px;width:1.9px;height:38.5px;background:#585c66;"></div>
<div style="left:1257.3px;top:769.2px;width:1.9px;height:38.5px;background:#585c66;"></div>
<div style="left:2139.6px;top:151px;width:1.5px;height:1236px;background:#686a72;"></div>
<div style="left:997px;top:153.2px;width:5px;height:38.5px;background:#6b8e14;"></div>
<div style="left:997px;top:268.7px;width:5px;height:38.5px;background:#6b8e14;"></div>
<div style="left:997px;top:576.7px;width:5px;height:38.5px;background:#148caf;"></div>
<div style="left:997px;top:653.7px;width:5px;height:38.5px;background:#148caf;"></div>
<div style="left:997px;top:730.7px;width:5px;height:38.5px;background:#148caf;"></div>
<div style="left:997px;top:769.2px;width:5px;height:38.5px;background:#148caf;"></div>
<div style="left:997px;top:807.7px;width:5px;height:38.5px;background:#148caf;"></div>
<div style="left:997px;top:846.2px;width:5px;height:38.5px;background:#148caf;"></div>
<div style="left:997px;top:884.7px;width:5px;height:38.5px;background:#148caf;"></div>
<div style="left:997px;top:923.2px;width:5px;height:38.5px;background:#148caf;"></div>
<div style="left:997px;top:1038.7px;width:5px;height:38.5px;background:#148caf;"></div>
<div style="left:997px;top:1192.7px;width:5px;height:38.5px;background:#148caf;"></div>
<div style="left:997px;top:1346.7px;width:5px;height:38.5px;background:#148caf;"></div>
<div class="ln" style="top:153.75px;">17</div>
<div class="cl" style="top:153.75px"><span class="k">import</span><span class="ws">·</span>logging</div>
<div class="ln" style="top:192.25px;">18</div>
<div class="cl" style="top:192.25px"><span class="k">from</span><span class="ws">·</span>odoo<span class="ws">·</span><span class="k">import</span><span class="ws">·</span>api,<span class="ws">·</span>fields,<span class="ws">·</span>models,<span class="ws">·</span>_</div>
<div class="ln" style="top:230.75px;">19</div>
<div class="ln" style="top:269.25px;">20</div>
<div class="cl" style="top:269.25px">_logger<span class="ws">·</span><span class="k">=</span><span class="ws">·</span>logging.getLogger<span class="p1">(</span><span class="b">__name__</span><span class="p1">)</span></div>
<div class="ln" style="top:307.75px;">21</div>
<div class="ln" style="top:384.75px;">22</div>
<div class="cl" style="top:384.75px"><span class="k">class</span><span class="ws">·</span><span class="f">MrpProduction</span><span class="p1">(</span><span class="c">models</span>.<span class="c">Model</span><span class="p1">)</span>:</div>
<div class="ln" style="top:423.25px;">23</div>
<div class="cl" style="top:423.25px"><span class="ws">····</span>_inherit<span class="ws">·</span><span class="k">=</span><span class="ws">·</span><span class="s">'mrp.production'</span></div>
<div class="ln" style="top:461.75px;">24</div>
<div class="ln" style="top:500.25px;">25</div>
<div class="cl" style="top:500.25px"><span class="ws">····</span><span class="f">@api.multi</span></div>
<div class="ln" style="top:538.75px;">26</div>
<div class="cl" style="top:538.75px"><span class="ws">····</span><span class="k">def</span><span class="ws">·</span><span class="f">_generate_moves</span><span class="p1">(</span>self<span class="p1">)</span>:</div>
<div class="ln" style="top:577.25px;">27</div>
<div class="cl" style="top:577.25px"><span class="ws">········</span><span class="b">super</span><span class="p1">(</span>MrpProduction,<span class="ws">·</span>self<span class="p1">)</span>._generate_moves<span class="p1">()</span></div>
<div class="ln" style="top:615.75px;">28</div>
<div class="cl" style="top:615.75px"><span class="ws">········</span><span class="k">for</span><span class="ws">·</span>production<span class="ws">·</span><span class="k">in</span><span class="ws">·</span>self:</div>
<div class="ln" style="top:654.25px;">29</div>
<div class="cl" style="top:654.25px"><span class="ws">············</span><span class="k">try</span>:</div>
<div class="ln" style="top:692.75px;">30</div>
<div class="cl" style="top:692.75px"><span class="ws">················</span><span class="m">#</span><span class="ws">·</span><span class="m">Assign</span><span class="ws">·</span><span class="m">consumable</span><span class="ws">·</span><span class="m">immediatly</span></div>
<div class="ln" style="top:731.25px;">31</div>
<div class="cl" style="top:731.25px"><span class="ws">················</span>consu_move_ids<span class="ws">·</span><span class="k">=</span><span class="ws">·</span>production.move_raw_ids.filtered<span class="p1">(</span></div>
<div class="ln" style="top:769.75px;">32</div>
<div class="cl" style="top:769.75px"><span class="ws">····················</span><span class="k">lambda</span><span class="ws">·</span>r:<span class="ws">·</span>r.product_type<span class="ws">·</span><span class="k">==</span><span class="ws">·</span><span class="s">'consu'</span></div>
<div class="ln" style="top:808.25px;">33</div>
<div class="cl" style="top:808.25px"><span class="ws">················</span><span class="p1">)</span></div>
<div class="ln" style="top:846.75px;">34</div>
<div class="cl" style="top:846.75px"><span class="ws">················</span>consu_move_ids._action_assign<span class="p1">()</span></div>
<div class="ln" style="top:885.25px;">35</div>
<div class="cl" style="top:885.25px"><span class="ws">············</span><span class="k">except</span><span class="ws">·</span><span class="b">Exception</span><span class="ws">·</span><span class="k">as</span><span class="ws">·</span>e:</div>
<div class="ln" style="top:923.75px;">36</div>
<div class="cl" style="top:923.75px"><span class="ws">················</span>_logger.error<span class="p1">(</span><span class="b">str</span><span class="p2">(</span>e<span class="p2">)</span><span class="p1">)</span></div>
<div class="ln" style="top:962.25px;color:#e4e4e4;">37</div>
<div class="ln" style="top:1000.75px;">38</div>
<div class="cl" style="top:1000.75px"><span class="ws">····</span><span class="k">def</span><span class="ws">·</span><span class="f">_generate_raw_moves</span><span class="p1">(</span>self,<span class="ws">·</span>exploded_lines<span class="p1">)</span>:</div>
<div class="ln" style="top:1039.25px;">39</div>
<div class="cl" style="top:1039.25px"><span class="ws">········</span>moves<span class="ws">·</span><span class="k">=</span><span class="ws">·</span><span class="b">super</span><span class="p1">(</span>MrpProduction,<span class="ws">·</span>self<span class="p1">)</span>._generate_raw_moves<span class="p1">(</span>exploded_lines<span class="p1">)</span></div>
<div class="ln" style="top:1077.75px;">40</div>
<div class="cl" style="top:1077.75px"><span class="ws">········</span><span class="k">return</span><span class="ws">·</span>moves</div>
<div class="ln" style="top:1116.25px;">41</div>
<div class="ln" style="top:1154.75px;">42</div>
<div class="cl" style="top:1154.75px"><span class="ws">····</span><span class="k">def</span><span class="ws">·</span><span class="f">_generate_raw_move</span><span class="p1">(</span>self,<span class="ws">·</span>bom_line,<span class="ws">·</span>line_data<span class="p1">)</span>:</div>
<div class="ln" style="top:1193.25px;">43</div>
<div class="cl" style="top:1193.25px"><span class="ws">········</span>move<span class="ws">·</span><span class="k">=</span><span class="ws">·</span><span class="b">super</span><span class="p1">(</span>MrpProduction,<span class="ws">·</span>self<span class="p1">)</span>._generate_raw_move<span class="p1">(</span>bom_line,<span class="ws">·</span>line_data<span class="p1">)</span></div>
<div class="ln" style="top:1231.75px;">44</div>
<div class="cl" style="top:1231.75px"><span class="ws">········</span><span class="k">return</span><span class="ws">·</span>move</div>
<div class="ln" style="top:1270.25px;">45</div>
<div class="ln" style="top:1308.75px;">46</div>
<div class="cl" style="top:1308.75px"><span class="ws">····</span><span class="k">def</span><span class="ws">·</span><span class="f">_get_raw_move_data</span><span class="p1">(</span>self,<span class="ws">·</span>bom_line,<span class="ws">·</span>line_data<span class="p1">)</span>:</div>
<div class="ln" style="top:1347.25px;">47</div>
<div class="cl" style="top:1347.25px"><span class="ws">········</span>res<span class="ws">·</span><span class="k">=</span><span class="ws">·</span><span class="b">super</span><span class="p1">(</span>MrpProduction,<span class="ws">·</span>self<span class="p1">)</span>._get_raw_move_data<span class="p1">(</span>bom_line,<span class="ws">·</span>line_data<span class="p1">)</span></div>
<div class="cl bl" style="top:962.25px;left:1131.6px">You, 22 days ago • New wip module to trace manufacturing orders procurements</div>
<div style="left:1034.5px;top:349.78px;height:34px;line-height:34px;font-family:'Liberation Sans', sans-serif;font-size:24.3px;color:#8c8c91;white-space:pre;letter-spacing:-0.115px;">You, 7 minutes ago | 1 author (You)</div>
<svg style="left:1034.7px;top:223.9px;" width="56" height="7" viewBox="0 0 56 7"><path d="M0 4.5 L3.5 1.5 L7.0 4.5 L10.5 1.5 L14.0 4.5 L17.5 1.5 L21.0 4.5 L24.5 1.5 L28.0 4.5 L31.5 1.5 L35.0 4.5 L38.5 1.5 L42.0 4.5 L45.5 1.5 L49.0 4.5 L52.5 1.5 L56.0 4.5 L59.5 1.5 L63.0 4.5" stroke="#e5b820" stroke-width="1.5" fill="none"/></svg>
<svg style="left:1034.7px;top:300.9px;" width="98" height="7" viewBox="0 0 98 7"><path d="M0 4.5 L3.5 1.5 L7.0 4.5 L10.5 1.5 L14.0 4.5 L17.5 1.5 L21.0 4.5 L24.5 1.5 L28.0 4.5 L31.5 1.5 L35.0 4.5 L38.5 1.5 L42.0 4.5 L45.5 1.5 L49.0 4.5 L52.5 1.5 L56.0 4.5 L59.5 1.5 L63.0 4.5 L66.5 1.5 L70.0 4.5 L73.5 1.5 L77.0 4.5 L80.5 1.5 L84.0 4.5 L87.5 1.5 L91.0 4.5 L94.5 1.5 L98.0 4.5 L101.5 1.5 L105.0 4.5" stroke="#6fb3f2" stroke-width="1.5" fill="none"/></svg>
<svg style="left:1034.7px;top:416.4px;" width="70" height="7" viewBox="0 0 70 7"><path d="M0 4.5 L3.5 1.5 L7.0 4.5 L10.5 1.5 L14.0 4.5 L17.5 1.5 L21.0 4.5 L24.5 1.5 L28.0 4.5 L31.5 1.5 L35.0 4.5 L38.5 1.5 L42.0 4.5 L45.5 1.5 L49.0 4.5 L52.5 1.5 L56.0 4.5 L59.5 1.5 L63.0 4.5 L66.5 1.5 L70.0 4.5 L73.5 1.5 L77.0 4.5" stroke="#6fb3f2" stroke-width="1.5" fill="none"/></svg>
<svg style="left:1090.7px;top:570.4px;" width="42" height="7" viewBox="0 0 42 7"><path d="M0 4.5 L3.5 1.5 L7.0 4.5 L10.5 1.5 L14.0 4.5 L17.5 1.5 L21.0 4.5 L24.5 1.5 L28.0 4.5 L31.5 1.5 L35.0 4.5 L38.5 1.5 L42.0 4.5 L45.5 1.5 L49.0 4.5" stroke="#e5b820" stroke-width="1.5" fill="none"/></svg>
<svg style="left:1258.7px;top:878.4px;" width="196" height="7" viewBox="0 0 196 7"><path d="M0 4.5 L3.5 1.5 L7.0 4.5 L10.5 1.5 L14.0 4.5 L17.5 1.5 L21.0 4.5 L24.5 1.5 L28.0 4.5 L31.5 1.5 L35.0 4.5 L38.5 1.5 L42.0 4.5 L45.5 1.5 L49.0 4.5 L52.5 1.5 L56.0 4.5 L59.5 1.5 L63.0 4.5 L66.5 1.5 L70.0 4.5 L73.5 1.5 L77.0 4.5 L80.5 1.5 L84.0 4.5 L87.5 1.5 L91.0 4.5 L94.5 1.5 L98.0 4.5 L101.5 1.5 L105.0 4.5 L108.5 1.5 L112.0 4.5 L115.5 1.5 L119.0 4.5 L122.5 1.5 L126.0 4.5 L129.5 1.5 L133.0 4.5 L136.5 1.5 L140.0 4.5 L143.5 1.5 L147.0 4.5 L150.5 1.5 L154.0 4.5 L157.5 1.5 L161.0 4.5 L164.5 1.5 L168.0 4.5 L171.5 1.5 L175.0 4.5 L178.5 1.5 L182.0 4.5 L185.5 1.5 L189.0 4.5 L192.5 1.5 L196.0 4.5 L199.5 1.5 L203.0 4.5" stroke="#e5b820" stroke-width="1.5" fill="none"/></svg>
<svg style="left:1202.7px;top:916.9px;" width="84" height="7" viewBox="0 0 84 7"><path d="M0 4.5 L3.5 1.5 L7.0 4.5 L10.5 1.5 L14.0 4.5 L17.5 1.5 L21.0 4.5 L24.5 1.5 L28.0 4.5 L31.5 1.5 L35.0 4.5 L38.5 1.5 L42.0 4.5 L45.5 1.5 L49.0 4.5 L52.5 1.5 L56.0 4.5 L59.5 1.5 L63.0 4.5 L66.5 1.5 L70.0 4.5 L73.5 1.5 L77.0 4.5 L80.5 1.5 L84.0 4.5 L87.5 1.5 L91.0 4.5" stroke="#6fb3f2" stroke-width="1.5" fill="none"/></svg>
<svg style="left:1300.7px;top:916.9px;" width="126" height="7" viewBox="0 0 126 7"><path d="M0 4.5 L3.5 1.5 L7.0 4.5 L10.5 1.5 L14.0 4.5 L17.5 1.5 L21.0 4.5 L24.5 1.5 L28.0 4.5 L31.5 1.5 L35.0 4.5 L38.5 1.5 L42.0 4.5 L45.5 1.5 L49.0 4.5 L52.5 1.5 L56.0 4.5 L59.5 1.5 L63.0 4.5 L66.5 1.5 L70.0 4.5 L73.5 1.5 L77.0 4.5 L80.5 1.5 L84.0 4.5 L87.5 1.5 L91.0 4.5 L94.5 1.5 L98.0 4.5 L101.5 1.5 L105.0 4.5 L108.5 1.5 L112.0 4.5 L115.5 1.5 L119.0 4.5 L122.5 1.5 L126.0 4.5 L129.5 1.5 L133.0 4.5" stroke="#e5b820" stroke-width="1.5" fill="none"/></svg>
<svg style="left:915px;top:929.7px;" width="27" height="26" viewBox="0 0 27 26"><path d="M4 3 H15 L23.5 13 L15 23 H4 Z" stroke="#ffcc00" stroke-width="2.6" fill="none" stroke-linejoin="round"/><circle cx="11.6" cy="13" r="4.2" fill="#e51400"/></svg>
<div style="left:907px;top:52px;width:295px;height:61px;background:#0e1021;"></div>
<div style="left:1202px;top:52px;width:589.6px;height:61px;background:#2d2d2d;"></div>
<div style="left:1792.6px;top:52px;width:452.4px;height:61px;background:#2d2d2d;"></div>
<div style="left:2246px;top:52px;width:258.5px;height:61px;background:#2d2d2d;"></div>
<div style="left:2505.5px;top:52px;width:600.5px;height:61px;background:#2d2d2d;"></div>
<div style="left:3107px;top:52px;width:67.4px;height:61px;background:#2d2d2d;"></div>
<div style="left:927.6px;top:68.14px;height:24px;line-height:24px;font-family:'Liberation Sans', sans-serif;font-size:17.5px;color:#c3d13b;white-space:pre;font-weight:bold;letter-spacing:-0.880px;">PY</div>
<div style="left:964px;top:67.68px;height:31px;line-height:31px;font-family:'Liberation Sans', sans-serif;font-size:22px;color:#ffffff;white-space:pre;letter-spacing:0.458px;">mrp_production.py</div>
<svg style="left:1163px;top:70px;" width="24" height="24" viewBox="0 0 24 24"><path d="M4.5 4.5 L19.5 19.5 M19.5 4.5 L4.5 19.5" stroke="#e8e8e8" stroke-width="1.9" fill="none"/></svg>
<div style="left:1224.6px;top:68.14px;height:24px;line-height:24px;font-family:'Liberation Sans', sans-serif;font-size:17.5px;color:#c3d13b;white-space:pre;font-weight:bold;letter-spacing:-0.880px;">PY</div>
<div style="left:1260.3px;top:67.68px;height:31px;line-height:31px;font-family:'Liberation Sans', sans-serif;font-size:22px;color:#a0a0a0;white-space:pre;font-style:italic;letter-spacing:-0.343px;">purchase_order_line.py</div>
<div style="left:1493.8px;top:70.51px;height:27px;line-height:27px;font-family:'Liberation Sans', sans-serif;font-size:19.6px;color:#7d7d7d;white-space:pre;letter-spacing:-0.042px;">.../purchase_stock_cancel/...</div>
<div style="left:1812px;top:68.14px;height:24px;line-height:24px;font-family:'Liberation Sans', sans-serif;font-size:17.5px;color:#c3d13b;white-space:pre;font-weight:bold;letter-spacing:-0.880px;">PY</div>
<div style="left:1848.5px;top:67.68px;height:31px;line-height:31px;font-family:'Liberation Sans', sans-serif;font-size:22px;color:#a0a0a0;white-space:pre;letter-spacing:-0.026px;">stock_move.py</div>
<div style="left:2005.9px;top:70.51px;height:27px;line-height:27px;font-family:'Liberation Sans', sans-serif;font-size:19.6px;color:#7d7d7d;white-space:pre;letter-spacing:0.310px;">.../mrp_traceability/...</div>
<div style="left:2266.2px;top:68.14px;height:24px;line-height:24px;font-family:'Liberation Sans', sans-serif;font-size:17.5px;color:#c3d13b;white-space:pre;font-weight:bold;letter-spacing:-0.880px;">PY</div>
<div style="left:2301.9px;top:67.68px;height:31px;line-height:31px;font-family:'Liberation Sans', sans-serif;font-size:22px;color:#a0a0a0;white-space:pre;letter-spacing:-0.542px;">__manifest__.py</div>
<div style="left:2526.2px;top:68.14px;height:24px;line-height:24px;font-family:'Liberation Sans', sans-serif;font-size:17.5px;color:#c3d13b;white-space:pre;font-weight:bold;letter-spacing:-0.880px;">PY</div>
<div style="left:2562.2px;top:67.68px;height:31px;line-height:31px;font-family:'Liberation Sans', sans-serif;font-size:22px;color:#a0a0a0;white-space:pre;letter-spacing:-0.052px;">purchase_order_line.py</div>
<div style="left:2801.7px;top:70.51px;height:27px;line-height:27px;font-family:'Liberation Sans', sans-serif;font-size:19.6px;color:#7d7d7d;white-space:pre;letter-spacing:0.002px;">.../purchase_stock_archive/...</div>
<div style="left:3128.3px;top:68.14px;height:24px;line-height:24px;font-family:'Liberation Sans', sans-serif;font-size:17.5px;color:#c3d13b;white-space:pre;font-weight:bold;letter-spacing:-0.880px;">PY</div>
<div style="left:3164.4px;top:67.68px;height:31px;line-height:31px;font-family:'Liberation Sans', sans-serif;font-size:22px;color:#a0a0a0;white-space:pre;">s</div>
<div style="left:3174.4px;top:52px;width:466.6px;height:61px;background:#252526;"></div>
<svg style="left:3190px;top:68px;" width="28" height="28" viewBox="0 0 28 28"><circle cx="6" cy="6" r="3.2" stroke="#d8d8d8" fill="none" stroke-width="2" stroke-linecap="round" stroke-linejoin="round"/><circle cx="22" cy="22" r="3.2" stroke="#d8d8d8" fill="none" stroke-width="2" stroke-linecap="round" stroke-linejoin="round"/><path d="M6 9.5 V19 Q6 21.5 8.5 21.5 H13 M10.5 18.5 L13.5 21.5 L10.5 24.5" stroke="#d8d8d8" fill="none" stroke-width="2" stroke-linecap="round" stroke-linejoin="round"/><path d="M22 18.5 V9 Q22 6.5 19.5 6.5 H15 M17.5 3.5 L14.5 6.5 L17.5 9.5" stroke="#d8d8d8" fill="none" stroke-width="2" stroke-linecap="round" stroke-linejoin="round"/></svg>
<svg style="left:3250px;top:70px;" width="26" height="26" viewBox="0 0 26 26"><path d="M5.5 3.5 L20 12.5 L5.5 21.5 Z" stroke="#89d185" stroke-width="2.6" fill="none" stroke-linejoin="round"/></svg>
<svg style="left:3302px;top:70px;" width="32" height="26" viewBox="0 0 32 26"><circle cx="21" cy="12.5" r="7" stroke="#d8d8d8" fill="none" stroke-width="2" stroke-linecap="round" stroke-linejoin="round"/><path d="M14 12.5 H3 M9 5.5 L2.5 12.5 L9 19.5 M28 12.5 H30.5" stroke="#d8d8d8" fill="none" stroke-width="2" stroke-linecap="round" stroke-linejoin="round"/></svg>
<svg style="left:3358px;top:70px;" width="32" height="26" viewBox="0 0 32 26"><circle cx="16" cy="12.5" r="7" stroke="#6f6f6f" fill="none" stroke-width="2" stroke-linecap="round" stroke-linejoin="round"/><path d="M2 12.5 H9 M23 12.5 H30" stroke="#6f6f6f" fill="none" stroke-width="2" stroke-linecap="round" stroke-linejoin="round"/></svg>
<svg style="left:3414px;top:70px;" width="32" height="26" viewBox="0 0 32 26"><circle cx="11" cy="12.5" r="7" stroke="#6f6f6f" fill="none" stroke-width="2" stroke-linecap="round" stroke-linejoin="round"/><path d="M18 12.5 H29 M23 5.5 L29.5 12.5 L23 19.5 M1.5 12.5 H4" stroke="#6f6f6f" fill="none" stroke-width="2" stroke-linecap="round" stroke-linejoin="round"/></svg>
<svg style="left:3472px;top:69px;" width="28" height="28" viewBox="0 0 28 28"><circle cx="14" cy="14" r="12" stroke="#d8d8d8" fill="none" stroke-width="2" stroke-linecap="round" stroke-linejoin="round" stroke-width="2.2"/><circle cx="12" cy="7.5" r="2.3" fill="#d8d8d8"/><circle cx="12" cy="20.5" r="2.3" fill="#d8d8d8"/><circle cx="18.5" cy="14.5" r="2.3" fill="#d8d8d8"/><path d="M12 7.5 V20.5 M12 7.5 L18.5 14.5" stroke="#d8d8d8" fill="none" stroke-width="2" stroke-linecap="round" stroke-linejoin="round" stroke-width="2.2"/></svg>
<svg style="left:3528px;top:68px;" width="28" height="28" viewBox="0 0 28 28"><rect x="3" y="2.5" width="22.5" height="21.5" rx="1.5" stroke="#d8d8d8" fill="none" stroke-width="2" stroke-linecap="round" stroke-linejoin="round" stroke-width="2.2"/><path d="M14.2 2.5 V24" stroke="#d8d8d8" fill="none" stroke-width="2" stroke-linecap="round" stroke-linejoin="round" stroke-width="2.2"/></svg>
<svg style="left:3580px;top:76px;" width="32" height="12" viewBox="0 0 32 12"><circle cx="6.5" cy="6" r="2.1" fill="#d8d8d8"/><circle cx="15.5" cy="6" r="2.1" fill="#d8d8d8"/><circle cx="25" cy="6" r="2.1" fill="#d8d8d8"/></svg>
<div style="left:935.8px;top:117.58px;height:31px;line-height:31px;font-family:'Liberation Sans', sans-serif;font-size:22px;color:#a6a8ad;white-space:pre;letter-spacing:0.292px;">addons-dec</div>
<svg style="left:1060px;top:119px;" width="16" height="26" viewBox="0 0 16 26"><path d="M4 4.2 L12 13 L4 21.8" stroke="#a6a8ad" stroke-width="1.9" fill="none"/></svg>
<div style="left:1083.1px;top:117.58px;height:31px;line-height:31px;font-family:'Liberation Sans', sans-serif;font-size:22px;color:#a6a8ad;white-space:pre;letter-spacing:0.220px;">mrp_traceability</div>
<svg style="left:1248.5px;top:119px;" width="16" height="26" viewBox="0 0 16 26"><path d="M4 4.2 L12 13 L4 21.8" stroke="#a6a8ad" stroke-width="1.9" fill="none"/></svg>
<div style="left:1270.6px;top:117.58px;height:31px;line-height:31px;font-family:'Liberation Sans', sans-serif;font-size:22px;color:#a6a8ad;white-space:pre;letter-spacing:0.246px;">models</div>
<svg style="left:1349.5px;top:119px;" width="16" height="26" viewBox="0 0 16 26"><path d="M4 4.2 L12 13 L4 21.8" stroke="#a6a8ad" stroke-width="1.9" fill="none"/></svg>
<div style="left:1374.3px;top:118.44px;height:24px;line-height:24px;font-family:'Liberation Sans', sans-serif;font-size:17.5px;color:#c3d13b;white-space:pre;font-weight:bold;letter-spacing:-0.880px;">PY</div>
<div style="left:1411px;top:117.58px;height:31px;line-height:31px;font-family:'Liberation Sans', sans-serif;font-size:22px;color:#a6a8ad;white-space:pre;letter-spacing:0.422px;">mrp_production.py</div>
<svg style="left:1606.5px;top:119px;" width="16" height="26" viewBox="0 0 16 26"><path d="M4 4.2 L12 13 L4 21.8" stroke="#a6a8ad" stroke-width="1.9" fill="none"/></svg>
<svg style="left:1630px;top:119px;" width="28" height="26" viewBox="0 0 28 26"><path d="M3 7 L7 3 L11 7 L7 11 Z M11 7 H16 M13.5 7 V19 H18 M18 15.5 L21.5 12 L25 15.5 L21.5 19 Z M18 4 H25 V10 H18 Z" stroke="#ee9d28" fill="none" stroke-width="1.8" stroke-linejoin="round" transform="translate(0,2)"/></svg>
<div style="left:1668.4px;top:117.58px;height:31px;line-height:31px;font-family:'Liberation Sans', sans-serif;font-size:22px;color:#a6a8ad;white-space:pre;letter-spacing:0.579px;">MrpProduction</div>
<svg style="left:1825.5px;top:119px;" width="16" height="26" viewBox="0 0 16 26"><path d="M4 4.2 L12 13 L4 21.8" stroke="#a6a8ad" stroke-width="1.9" fill="none"/></svg>
<svg style="left:1848px;top:119px;" width="26" height="26" viewBox="0 0 26 26"><path d="M13 2.5 L23 7.5 V18.5 L13 23.5 L3 18.5 V7.5 Z M3 7.5 L13 12.5 L23 7.5 M13 12.5 V23.5" stroke="#b180d7" fill="none" stroke-width="1.8" stroke-linejoin="round"/></svg>
<div style="left:1885.7px;top:117.58px;height:31px;line-height:31px;font-family:'Liberation Sans', sans-serif;font-size:22px;color:#a6a8ad;white-space:pre;letter-spacing:-0.222px;">_generate_moves</div>
<div style="left:3414.8px;top:199.6px;width:139.5px;height:98.4px;background:#222632;"></div>
<svg style="left:3414.8px;top:151px;" width="139.5" height="300" viewBox="0 0 139.5 300"><rect x="0" y="50.6" width="139.5" height="3.4" fill="#80702a"/><rect x="0" y="74.9" width="139.5" height="3.3" fill="#80702a"/><rect x="0" y="99.1" width="139.5" height="6.1" fill="#8a7a28"/><rect x="0" y="107.9" width="139.5" height="3.1" fill="#243652"/><g opacity="0.78"><rect x="8.1" y="-0.1" width="1.0" height="1.9" fill="#74767e"/><rect x="10.1" y="-0.1" width="8.1" height="1.9" fill="#74767e"/><rect x="19.2" y="-0.1" width="8.1" height="1.9" fill="#74767e"/><rect x="28.3" y="-0.1" width="2.0" height="1.9" fill="#74767e"/><rect x="8.1" y="2.9" width="1.0" height="1.9" fill="#74767e"/><rect x="10.1" y="2.9" width="4.0" height="1.9" fill="#74767e"/><rect x="15.2" y="2.9" width="3.0" height="1.9" fill="#74767e"/><rect x="19.2" y="2.9" width="6.1" height="1.9" fill="#74767e"/><rect x="26.3" y="2.9" width="3.0" height="1.9" fill="#74767e"/><rect x="30.3" y="2.9" width="9.1" height="1.9" fill="#74767e"/><rect x="40.4" y="2.9" width="9.1" height="1.9" fill="#74767e"/><rect x="50.5" y="2.9" width="8.1" height="1.9" fill="#74767e"/><rect x="8.1" y="5.9" width="1.0" height="1.9" fill="#74767e"/><rect x="8.1" y="8.9" width="1.0" height="1.9" fill="#74767e"/><rect x="10.1" y="8.9" width="5.0" height="1.9" fill="#74767e"/><rect x="16.2" y="8.9" width="10.1" height="1.9" fill="#74767e"/><rect x="27.3" y="8.9" width="4.0" height="1.9" fill="#74767e"/><rect x="32.3" y="8.9" width="7.1" height="1.9" fill="#74767e"/><rect x="40.4" y="8.9" width="9.1" height="1.9" fill="#74767e"/><rect x="50.5" y="8.9" width="3.0" height="1.9" fill="#74767e"/><rect x="54.6" y="8.9" width="2.0" height="1.9" fill="#74767e"/><rect x="57.6" y="8.9" width="9.1" height="1.9" fill="#74767e"/><rect x="67.7" y="8.9" width="6.1" height="1.9" fill="#74767e"/><rect x="8.1" y="12.0" width="1.0" height="1.9" fill="#74767e"/><rect x="10.1" y="12.0" width="5.0" height="1.9" fill="#74767e"/><rect x="16.2" y="12.0" width="6.1" height="1.9" fill="#74767e"/><rect x="23.2" y="12.0" width="3.0" height="1.9" fill="#74767e"/><rect x="27.3" y="12.0" width="8.1" height="1.9" fill="#74767e"/><rect x="36.4" y="12.0" width="9.1" height="1.9" fill="#74767e"/><rect x="8.1" y="15.0" width="1.0" height="1.9" fill="#74767e"/><rect x="10.1" y="15.0" width="6.1" height="1.9" fill="#74767e"/><rect x="17.2" y="15.0" width="7.1" height="1.9" fill="#74767e"/><rect x="25.3" y="15.0" width="10.1" height="1.9" fill="#74767e"/><rect x="36.4" y="15.0" width="2.0" height="1.9" fill="#74767e"/><rect x="39.4" y="15.0" width="9.1" height="1.9" fill="#74767e"/><rect x="49.5" y="15.0" width="5.0" height="1.9" fill="#74767e"/><rect x="55.6" y="15.0" width="2.0" height="1.9" fill="#74767e"/><rect x="58.6" y="15.0" width="4.0" height="1.9" fill="#74767e"/><rect x="63.6" y="15.0" width="3.0" height="1.9" fill="#74767e"/><rect x="67.7" y="15.0" width="5.0" height="1.9" fill="#74767e"/><rect x="8.1" y="18.0" width="1.0" height="1.9" fill="#74767e"/><rect x="10.1" y="18.0" width="3.0" height="1.9" fill="#74767e"/><rect x="14.2" y="18.0" width="9.1" height="1.9" fill="#74767e"/><rect x="24.3" y="18.0" width="6.1" height="1.9" fill="#74767e"/><rect x="31.3" y="18.0" width="2.0" height="1.9" fill="#74767e"/><rect x="34.4" y="18.0" width="2.0" height="1.9" fill="#74767e"/><rect x="37.4" y="18.0" width="4.0" height="1.9" fill="#74767e"/><rect x="42.4" y="18.0" width="3.0" height="1.9" fill="#74767e"/><rect x="8.1" y="21.0" width="1.0" height="1.9" fill="#74767e"/><rect x="10.1" y="21.0" width="7.1" height="1.9" fill="#74767e"/><rect x="18.2" y="21.0" width="4.0" height="1.9" fill="#74767e"/><rect x="23.2" y="21.0" width="8.1" height="1.9" fill="#74767e"/><rect x="32.3" y="21.0" width="2.0" height="1.9" fill="#74767e"/><rect x="35.4" y="21.0" width="3.0" height="1.9" fill="#74767e"/><rect x="39.4" y="21.0" width="10.1" height="1.9" fill="#74767e"/><rect x="50.5" y="21.0" width="3.0" height="1.9" fill="#74767e"/><rect x="54.6" y="21.0" width="7.1" height="1.9" fill="#74767e"/><rect x="62.6" y="21.0" width="2.0" height="1.9" fill="#74767e"/><rect x="65.7" y="21.0" width="4.0" height="1.9" fill="#74767e"/><rect x="8.1" y="24.0" width="1.0" height="1.9" fill="#74767e"/><rect x="10.1" y="24.0" width="5.0" height="1.9" fill="#74767e"/><rect x="16.2" y="24.0" width="7.1" height="1.9" fill="#74767e"/><rect x="24.3" y="24.0" width="8.1" height="1.9" fill="#74767e"/><rect x="33.3" y="24.0" width="4.0" height="1.9" fill="#74767e"/><rect x="38.4" y="24.0" width="5.0" height="1.9" fill="#74767e"/><rect x="44.5" y="24.0" width="2.0" height="1.9" fill="#74767e"/><rect x="47.5" y="24.0" width="3.0" height="1.9" fill="#74767e"/><rect x="51.5" y="24.0" width="4.0" height="1.9" fill="#74767e"/><rect x="56.6" y="24.0" width="5.0" height="1.9" fill="#74767e"/><rect x="62.6" y="24.0" width="9.1" height="1.9" fill="#74767e"/><rect x="8.1" y="27.0" width="1.0" height="1.9" fill="#74767e"/><rect x="10.1" y="27.0" width="9.1" height="1.9" fill="#74767e"/><rect x="20.2" y="27.0" width="7.1" height="1.9" fill="#74767e"/><rect x="28.3" y="27.0" width="6.1" height="1.9" fill="#74767e"/><rect x="35.4" y="27.0" width="4.0" height="1.9" fill="#74767e"/><rect x="40.4" y="27.0" width="4.0" height="1.9" fill="#74767e"/><rect x="45.5" y="27.0" width="2.0" height="1.9" fill="#74767e"/><rect x="48.5" y="27.0" width="7.1" height="1.9" fill="#74767e"/><rect x="56.6" y="27.0" width="10.1" height="1.9" fill="#74767e"/><rect x="67.7" y="27.0" width="2.0" height="1.9" fill="#74767e"/><rect x="8.1" y="30.1" width="1.0" height="1.9" fill="#74767e"/><rect x="10.1" y="30.1" width="2.0" height="1.9" fill="#74767e"/><rect x="13.1" y="30.1" width="8.1" height="1.9" fill="#74767e"/><rect x="22.2" y="30.1" width="9.1" height="1.9" fill="#74767e"/><rect x="32.3" y="30.1" width="2.0" height="1.9" fill="#74767e"/><rect x="35.4" y="30.1" width="5.0" height="1.9" fill="#74767e"/><rect x="41.4" y="30.1" width="9.1" height="1.9" fill="#74767e"/><rect x="51.5" y="30.1" width="2.0" height="1.9" fill="#74767e"/><rect x="8.1" y="33.1" width="1.0" height="1.9" fill="#74767e"/><rect x="10.1" y="33.1" width="9.1" height="1.9" fill="#74767e"/><rect x="20.2" y="33.1" width="10.1" height="1.9" fill="#74767e"/><rect x="31.3" y="33.1" width="9.1" height="1.9" fill="#74767e"/><rect x="41.4" y="33.1" width="9.1" height="1.9" fill="#74767e"/><rect x="51.5" y="33.1" width="10.1" height="1.9" fill="#74767e"/><rect x="62.6" y="33.1" width="5.0" height="1.9" fill="#74767e"/><rect x="68.7" y="33.1" width="4.0" height="1.9" fill="#74767e"/><rect x="73.7" y="33.1" width="3.0" height="1.9" fill="#74767e"/><rect x="8.1" y="36.1" width="1.0" height="1.9" fill="#74767e"/><rect x="10.1" y="36.1" width="9.1" height="1.9" fill="#74767e"/><rect x="20.2" y="36.1" width="6.1" height="1.9" fill="#74767e"/><rect x="27.3" y="36.1" width="10.1" height="1.9" fill="#74767e"/><rect x="38.4" y="36.1" width="7.1" height="1.9" fill="#74767e"/><rect x="46.5" y="36.1" width="4.0" height="1.9" fill="#74767e"/><rect x="51.5" y="36.1" width="8.1" height="1.9" fill="#74767e"/><rect x="60.6" y="36.1" width="2.0" height="1.9" fill="#74767e"/><rect x="63.6" y="36.1" width="7.1" height="1.9" fill="#74767e"/><rect x="71.7" y="36.1" width="4.0" height="1.9" fill="#74767e"/><rect x="8.1" y="39.1" width="1.0" height="1.9" fill="#74767e"/><rect x="10.1" y="39.1" width="6.1" height="1.9" fill="#74767e"/><rect x="17.2" y="39.1" width="6.1" height="1.9" fill="#74767e"/><rect x="8.1" y="42.1" width="1.0" height="1.9" fill="#74767e"/><rect x="10.1" y="42.1" width="3.0" height="1.9" fill="#74767e"/><rect x="14.2" y="42.1" width="10.1" height="1.9" fill="#74767e"/><rect x="25.3" y="42.1" width="5.0" height="1.9" fill="#74767e"/><rect x="31.3" y="42.1" width="6.1" height="1.9" fill="#74767e"/><rect x="38.4" y="42.1" width="6.1" height="1.9" fill="#74767e"/><rect x="45.5" y="42.1" width="6.1" height="1.9" fill="#74767e"/><rect x="52.5" y="42.1" width="3.0" height="1.9" fill="#74767e"/><rect x="56.6" y="42.1" width="9.1" height="1.9" fill="#74767e"/><rect x="66.7" y="42.1" width="6.1" height="1.9" fill="#74767e"/><rect x="8.1" y="48.2" width="6.1" height="1.9" fill="#a8942e"/><rect x="15.2" y="48.2" width="7.1" height="1.9" fill="#a4a6ae"/><rect x="8.1" y="51.2" width="4.0" height="1.9" fill="#a8942e"/><rect x="13.1" y="51.2" width="4.0" height="1.9" fill="#a4a6ae"/><rect x="18.2" y="51.2" width="6.1" height="1.9" fill="#a8942e"/><rect x="25.3" y="51.2" width="4.0" height="1.9" fill="#a4a6ae"/><rect x="30.3" y="51.2" width="7.1" height="1.9" fill="#a4a6ae"/><rect x="38.4" y="51.2" width="7.1" height="1.9" fill="#a4a6ae"/><rect x="46.5" y="51.2" width="1.0" height="1.9" fill="#a4a6ae"/><rect x="8.1" y="57.2" width="7.1" height="1.9" fill="#a4a6ae"/><rect x="16.2" y="57.2" width="1.0" height="1.9" fill="#a8942e"/><rect x="18.2" y="57.2" width="17.2" height="1.9" fill="#a4a6ae"/><rect x="35.4" y="57.2" width="1.0" height="1.9" fill="#a07c28"/><rect x="36.4" y="57.2" width="8.1" height="1.9" fill="#6a80a6"/><rect x="44.5" y="57.2" width="1.0" height="1.9" fill="#a07c28"/><rect x="8.1" y="63.2" width="5.0" height="1.9" fill="#a8942e"/><rect x="14.2" y="63.2" width="13.1" height="1.9" fill="#a8501f"/><rect x="27.3" y="63.2" width="1.0" height="1.9" fill="#a07c28"/><rect x="28.3" y="63.2" width="6.1" height="1.9" fill="#a8501f"/><rect x="34.4" y="63.2" width="1.0" height="1.9" fill="#a4a6ae"/><rect x="35.4" y="63.2" width="5.0" height="1.9" fill="#a8501f"/><rect x="40.4" y="63.2" width="1.0" height="1.9" fill="#a07c28"/><rect x="41.4" y="63.2" width="1.0" height="1.9" fill="#a4a6ae"/><rect x="12.1" y="66.3" width="8.1" height="1.9" fill="#a4a6ae"/><rect x="21.2" y="66.3" width="1.0" height="1.9" fill="#a8942e"/><rect x="23.2" y="66.3" width="16.2" height="1.9" fill="#3a8a3c"/><rect x="12.1" y="72.3" width="10.1" height="1.9" fill="#a8501f"/><rect x="12.1" y="75.3" width="3.0" height="1.9" fill="#a8942e"/><rect x="16.2" y="75.3" width="15.2" height="1.9" fill="#a8501f"/><rect x="31.3" y="75.3" width="1.0" height="1.9" fill="#a07c28"/><rect x="32.3" y="75.3" width="4.0" height="1.9" fill="#a4a6ae"/><rect x="36.4" y="75.3" width="1.0" height="1.9" fill="#a07c28"/><rect x="37.4" y="75.3" width="1.0" height="1.9" fill="#a4a6ae"/><rect x="16.2" y="78.3" width="5.0" height="1.9" fill="#6a80a6"/><rect x="21.2" y="78.3" width="1.0" height="1.9" fill="#a07c28"/><rect x="22.2" y="78.3" width="14.1" height="1.9" fill="#a4a6ae"/><rect x="37.4" y="78.3" width="4.0" height="1.9" fill="#a4a6ae"/><rect x="41.4" y="78.3" width="1.0" height="1.9" fill="#a07c28"/><rect x="42.4" y="78.3" width="16.2" height="1.9" fill="#a4a6ae"/><rect x="58.6" y="78.3" width="2.0" height="1.9" fill="#a07c28"/><rect x="16.2" y="81.3" width="3.0" height="1.9" fill="#a8942e"/><rect x="20.2" y="81.3" width="10.1" height="1.9" fill="#a4a6ae"/><rect x="31.3" y="81.3" width="2.0" height="1.9" fill="#a8942e"/><rect x="34.4" y="81.3" width="5.0" height="1.9" fill="#a4a6ae"/><rect x="20.2" y="84.3" width="3.0" height="1.9" fill="#a8942e"/><rect x="23.2" y="84.3" width="1.0" height="1.9" fill="#a4a6ae"/><rect x="24.3" y="87.4" width="1.0" height="1.9" fill="#74767e"/><rect x="26.3" y="87.4" width="6.1" height="1.9" fill="#74767e"/><rect x="33.3" y="87.4" width="10.1" height="1.9" fill="#74767e"/><rect x="44.5" y="87.4" width="10.1" height="1.9" fill="#74767e"/><rect x="24.3" y="90.4" width="14.1" height="1.9" fill="#a4a6ae"/><rect x="39.4" y="90.4" width="1.0" height="1.9" fill="#a8942e"/><rect x="41.4" y="90.4" width="32.3" height="1.9" fill="#a4a6ae"/><rect x="73.7" y="90.4" width="1.0" height="1.9" fill="#a07c28"/><rect x="28.3" y="93.4" width="6.1" height="1.9" fill="#a8942e"/><rect x="35.4" y="93.4" width="2.0" height="1.9" fill="#a4a6ae"/><rect x="38.4" y="93.4" width="14.1" height="1.9" fill="#a4a6ae"/><rect x="53.5" y="93.4" width="2.0" height="1.9" fill="#a8942e"/><rect x="56.6" y="93.4" width="7.1" height="1.9" fill="#3a8a3c"/><rect x="24.3" y="96.4" width="1.0" height="1.9" fill="#a07c28"/><rect x="24.3" y="99.4" width="29.3" height="1.9" fill="#a4a6ae"/><rect x="53.5" y="99.4" width="2.0" height="1.9" fill="#a07c28"/><rect x="20.2" y="102.4" width="6.1" height="1.9" fill="#a8942e"/><rect x="27.3" y="102.4" width="9.1" height="1.9" fill="#6a80a6"/><rect x="37.4" y="102.4" width="2.0" height="1.9" fill="#a8942e"/><rect x="40.4" y="102.4" width="2.0" height="1.9" fill="#a4a6ae"/><rect x="24.3" y="105.5" width="13.1" height="1.9" fill="#a4a6ae"/><rect x="37.4" y="105.5" width="1.0" height="1.9" fill="#a07c28"/><rect x="38.4" y="105.5" width="3.0" height="1.9" fill="#6a80a6"/><rect x="41.4" y="105.5" width="1.0" height="1.9" fill="#a0585e"/><rect x="42.4" y="105.5" width="1.0" height="1.9" fill="#a4a6ae"/><rect x="43.4" y="105.5" width="1.0" height="1.9" fill="#a0585e"/><rect x="44.5" y="105.5" width="1.0" height="1.9" fill="#a07c28"/><rect x="12.1" y="111.5" width="3.0" height="1.9" fill="#a8942e"/><rect x="16.2" y="111.5" width="19.2" height="1.9" fill="#a8501f"/><rect x="35.4" y="111.5" width="1.0" height="1.9" fill="#a07c28"/><rect x="36.4" y="111.5" width="5.0" height="1.9" fill="#a4a6ae"/><rect x="42.4" y="111.5" width="14.1" height="1.9" fill="#a4a6ae"/><rect x="56.6" y="111.5" width="1.0" height="1.9" fill="#a07c28"/><rect x="57.6" y="111.5" width="1.0" height="1.9" fill="#a4a6ae"/><rect x="16.2" y="114.5" width="5.0" height="1.9" fill="#a4a6ae"/><rect x="22.2" y="114.5" width="1.0" height="1.9" fill="#a8942e"/><rect x="24.3" y="114.5" width="5.0" height="1.9" fill="#6a80a6"/><rect x="29.3" y="114.5" width="1.0" height="1.9" fill="#a07c28"/><rect x="30.3" y="114.5" width="14.1" height="1.9" fill="#a4a6ae"/><rect x="45.5" y="114.5" width="4.0" height="1.9" fill="#a4a6ae"/><rect x="49.5" y="114.5" width="1.0" height="1.9" fill="#a07c28"/><rect x="50.5" y="114.5" width="20.2" height="1.9" fill="#a4a6ae"/><rect x="70.7" y="114.5" width="1.0" height="1.9" fill="#a07c28"/><rect x="71.7" y="114.5" width="14.1" height="1.9" fill="#a4a6ae"/><rect x="85.9" y="114.5" width="1.0" height="1.9" fill="#a07c28"/><rect x="16.2" y="117.5" width="6.1" height="1.9" fill="#a8942e"/><rect x="23.2" y="117.5" width="5.0" height="1.9" fill="#a4a6ae"/><rect x="12.1" y="123.6" width="3.0" height="1.9" fill="#a8942e"/><rect x="16.2" y="123.6" width="18.2" height="1.9" fill="#a8501f"/><rect x="34.4" y="123.6" width="1.0" height="1.9" fill="#a07c28"/><rect x="35.4" y="123.6" width="5.0" height="1.9" fill="#a4a6ae"/><rect x="41.4" y="123.6" width="9.1" height="1.9" fill="#a4a6ae"/><rect x="51.5" y="123.6" width="9.1" height="1.9" fill="#a4a6ae"/><rect x="60.6" y="123.6" width="1.0" height="1.9" fill="#a07c28"/><rect x="61.6" y="123.6" width="1.0" height="1.9" fill="#a4a6ae"/><rect x="16.2" y="126.6" width="4.0" height="1.9" fill="#a4a6ae"/><rect x="21.2" y="126.6" width="1.0" height="1.9" fill="#a8942e"/><rect x="23.2" y="126.6" width="5.0" height="1.9" fill="#6a80a6"/><rect x="28.3" y="126.6" width="1.0" height="1.9" fill="#a07c28"/><rect x="29.3" y="126.6" width="14.1" height="1.9" fill="#a4a6ae"/><rect x="44.5" y="126.6" width="4.0" height="1.9" fill="#a4a6ae"/><rect x="48.5" y="126.6" width="1.0" height="1.9" fill="#a07c28"/><rect x="49.5" y="126.6" width="19.2" height="1.9" fill="#a4a6ae"/><rect x="68.7" y="126.6" width="1.0" height="1.9" fill="#a07c28"/><rect x="69.7" y="126.6" width="9.1" height="1.9" fill="#a4a6ae"/><rect x="79.8" y="126.6" width="9.1" height="1.9" fill="#a4a6ae"/><rect x="88.9" y="126.6" width="1.0" height="1.9" fill="#a07c28"/><rect x="16.2" y="129.6" width="6.1" height="1.9" fill="#a8942e"/><rect x="23.2" y="129.6" width="4.0" height="1.9" fill="#a4a6ae"/><rect x="12.1" y="135.6" width="3.0" height="1.9" fill="#a8942e"/><rect x="16.2" y="135.6" width="18.2" height="1.9" fill="#a8501f"/><rect x="34.4" y="135.6" width="1.0" height="1.9" fill="#a07c28"/><rect x="35.4" y="135.6" width="5.0" height="1.9" fill="#a4a6ae"/><rect x="41.4" y="135.6" width="9.1" height="1.9" fill="#a4a6ae"/><rect x="51.5" y="135.6" width="9.1" height="1.9" fill="#a4a6ae"/><rect x="60.6" y="135.6" width="1.0" height="1.9" fill="#a07c28"/><rect x="61.6" y="135.6" width="1.0" height="1.9" fill="#a4a6ae"/><rect x="16.2" y="138.6" width="3.0" height="1.9" fill="#a4a6ae"/><rect x="20.2" y="138.6" width="1.0" height="1.9" fill="#a8942e"/><rect x="22.2" y="138.6" width="5.0" height="1.9" fill="#6a80a6"/><rect x="27.3" y="138.6" width="1.0" height="1.9" fill="#a07c28"/><rect x="28.3" y="138.6" width="14.1" height="1.9" fill="#a4a6ae"/><rect x="43.4" y="138.6" width="4.0" height="1.9" fill="#a4a6ae"/><rect x="47.5" y="138.6" width="1.0" height="1.9" fill="#a07c28"/><rect x="48.5" y="138.6" width="19.2" height="1.9" fill="#a4a6ae"/><rect x="67.7" y="138.6" width="1.0" height="1.9" fill="#a07c28"/><rect x="68.7" y="138.6" width="9.1" height="1.9" fill="#a4a6ae"/><rect x="78.8" y="138.6" width="9.1" height="1.9" fill="#a4a6ae"/><rect x="87.9" y="138.6" width="1.0" height="1.9" fill="#a07c28"/><rect x="16.2" y="141.7" width="1.0" height="1.9" fill="#74767e"/><rect x="18.2" y="141.7" width="5.0" height="1.9" fill="#74767e"/><rect x="24.3" y="141.7" width="10.1" height="1.9" fill="#74767e"/><rect x="35.4" y="141.7" width="7.1" height="1.9" fill="#74767e"/><rect x="43.4" y="141.7" width="9.1" height="1.9" fill="#74767e"/><rect x="53.5" y="141.7" width="2.0" height="1.9" fill="#74767e"/><rect x="56.6" y="141.7" width="10.1" height="1.9" fill="#74767e"/><rect x="16.2" y="144.7" width="2.0" height="1.9" fill="#a8942e"/><rect x="19.2" y="144.7" width="24.2" height="1.9" fill="#a4a6ae"/><rect x="44.5" y="144.7" width="2.0" height="1.9" fill="#a8942e"/><rect x="47.5" y="144.7" width="7.1" height="1.9" fill="#3a8a3c"/><rect x="54.6" y="144.7" width="1.0" height="1.9" fill="#a4a6ae"/><rect x="20.2" y="147.7" width="1.0" height="1.9" fill="#74767e"/><rect x="22.2" y="147.7" width="4.0" height="1.9" fill="#74767e"/><rect x="27.3" y="147.7" width="7.1" height="1.9" fill="#74767e"/><rect x="35.4" y="147.7" width="4.0" height="1.9" fill="#74767e"/><rect x="40.4" y="147.7" width="10.1" height="1.9" fill="#74767e"/><rect x="51.5" y="147.7" width="4.0" height="1.9" fill="#74767e"/><rect x="56.6" y="147.7" width="8.1" height="1.9" fill="#74767e"/><rect x="65.7" y="147.7" width="6.1" height="1.9" fill="#74767e"/><rect x="72.7" y="147.7" width="1.0" height="1.9" fill="#74767e"/><rect x="20.2" y="150.7" width="1.0" height="1.9" fill="#74767e"/><rect x="22.2" y="150.7" width="9.1" height="1.9" fill="#74767e"/><rect x="32.3" y="150.7" width="5.0" height="1.9" fill="#74767e"/><rect x="38.4" y="150.7" width="3.0" height="1.9" fill="#74767e"/><rect x="42.4" y="150.7" width="3.0" height="1.9" fill="#74767e"/><rect x="46.5" y="150.7" width="8.1" height="1.9" fill="#74767e"/><rect x="55.6" y="150.7" width="9.1" height="1.9" fill="#74767e"/><rect x="65.7" y="150.7" width="7.1" height="1.9" fill="#74767e"/><rect x="20.2" y="153.7" width="7.1" height="1.9" fill="#a4a6ae"/><rect x="28.3" y="153.7" width="1.0" height="1.9" fill="#a8942e"/><rect x="30.3" y="153.7" width="9.1" height="1.9" fill="#a4a6ae"/><rect x="39.4" y="153.7" width="16.2" height="1.9" fill="#3a8a3c"/><rect x="55.6" y="153.7" width="9.1" height="1.9" fill="#a4a6ae"/><rect x="24.3" y="156.7" width="4.0" height="1.9" fill="#a4a6ae"/><rect x="28.3" y="156.7" width="17.2" height="1.9" fill="#3a8a3c"/><rect x="45.5" y="156.7" width="1.0" height="1.9" fill="#a4a6ae"/><rect x="20.2" y="159.7" width="1.0" height="1.9" fill="#a07c28"/><rect x="20.2" y="162.8" width="4.0" height="1.9" fill="#a4a6ae"/><rect x="24.3" y="162.8" width="12.1" height="1.9" fill="#3a8a3c"/><rect x="36.4" y="162.8" width="1.0" height="1.9" fill="#a4a6ae"/><rect x="38.4" y="162.8" width="1.0" height="1.9" fill="#a8942e"/><rect x="40.4" y="162.8" width="11.1" height="1.9" fill="#a4a6ae"/><rect x="20.2" y="165.8" width="4.0" height="1.9" fill="#a4a6ae"/><rect x="24.3" y="165.8" width="13.1" height="1.9" fill="#3a8a3c"/><rect x="37.4" y="165.8" width="1.0" height="1.9" fill="#a4a6ae"/><rect x="39.4" y="165.8" width="1.0" height="1.9" fill="#a8942e"/><rect x="41.4" y="165.8" width="27.3" height="1.9" fill="#a4a6ae"/><rect x="16.2" y="168.8" width="1.0" height="1.9" fill="#74767e"/><rect x="18.2" y="168.8" width="2.0" height="1.9" fill="#74767e"/><rect x="21.2" y="168.8" width="5.0" height="1.9" fill="#74767e"/><rect x="27.3" y="168.8" width="5.0" height="1.9" fill="#74767e"/><rect x="33.3" y="168.8" width="8.1" height="1.9" fill="#74767e"/><rect x="42.4" y="168.8" width="7.1" height="1.9" fill="#74767e"/><rect x="50.5" y="168.8" width="2.0" height="1.9" fill="#74767e"/><rect x="53.5" y="168.8" width="4.0" height="1.9" fill="#74767e"/><rect x="58.6" y="168.8" width="2.0" height="1.9" fill="#74767e"/><rect x="61.6" y="168.8" width="4.0" height="1.9" fill="#74767e"/><rect x="66.7" y="168.8" width="3.0" height="1.9" fill="#74767e"/><rect x="70.7" y="168.8" width="4.0" height="1.9" fill="#74767e"/><rect x="75.8" y="168.8" width="3.0" height="1.9" fill="#74767e"/><rect x="16.2" y="171.8" width="1.0" height="1.9" fill="#74767e"/><rect x="18.2" y="171.8" width="7.1" height="1.9" fill="#74767e"/><rect x="26.3" y="171.8" width="3.0" height="1.9" fill="#74767e"/><rect x="30.3" y="171.8" width="2.0" height="1.9" fill="#74767e"/><rect x="33.3" y="171.8" width="6.1" height="1.9" fill="#74767e"/><rect x="40.4" y="171.8" width="10.1" height="1.9" fill="#74767e"/><rect x="51.5" y="171.8" width="7.1" height="1.9" fill="#74767e"/><rect x="59.6" y="171.8" width="6.1" height="1.9" fill="#74767e"/><rect x="66.7" y="171.8" width="4.0" height="1.9" fill="#74767e"/><rect x="71.7" y="171.8" width="7.1" height="1.9" fill="#74767e"/><rect x="79.8" y="171.8" width="4.0" height="1.9" fill="#74767e"/><rect x="16.2" y="174.8" width="4.0" height="1.9" fill="#a4a6ae"/><rect x="20.2" y="174.8" width="14.1" height="1.9" fill="#3a8a3c"/><rect x="34.4" y="174.8" width="1.0" height="1.9" fill="#a4a6ae"/><rect x="36.4" y="174.8" width="1.0" height="1.9" fill="#a8942e"/><rect x="38.4" y="174.8" width="3.0" height="1.9" fill="#a4a6ae"/><rect x="42.4" y="174.8" width="28.3" height="1.9" fill="#a4a6ae"/><rect x="16.2" y="177.8" width="6.1" height="1.9" fill="#a8942e"/><rect x="23.2" y="177.8" width="3.0" height="1.9" fill="#a4a6ae"/></g></svg>
<div style="left:3416.8px;top:198.656px;width:2.1px;height:3.016px;background:#6b8e14;"></div>
<div style="left:3416.8px;top:207.704px;width:2.1px;height:3.016px;background:#6b8e14;"></div>
<div style="left:3416.8px;top:228.816px;width:2.1px;height:3.016px;background:#1b7ea3;"></div>
<div style="left:3416.8px;top:234.848px;width:2.1px;height:3.016px;background:#1b7ea3;"></div>
<div style="left:3416.8px;top:240.88px;width:2.1px;height:18.096px;background:#1b7ea3;"></div>
<div style="left:3416.8px;top:265.008px;width:2.1px;height:3.016px;background:#1b7ea3;"></div>
<div style="left:3416.8px;top:277.072px;width:2.1px;height:3.016px;background:#1b7ea3;"></div>
<div style="left:3416.8px;top:289.136px;width:2.1px;height:3.016px;background:#1b7ea3;"></div>
<div style="left:3416.8px;top:304.216px;width:2.1px;height:9.048px;background:#2a93c0;"></div>
<div style="left:3554.3px;top:151px;width:1.2px;height:1236px;background:#2c2f3d;"></div>
<div style="left:3555.5px;top:373.5px;width:85.5px;height:420.3px;background:#393a45;"></div>
<div style="left:3613.9px;top:164.4px;width:27.1px;height:12.2px;background:#75beff;"></div>
<div style="left:3613.9px;top:387px;width:27.1px;height:12.9px;background:#b8a030;"></div>
<div style="left:3613.9px;top:413.1px;width:27.1px;height:12.9px;background:#78a5d2;"></div>
<div style="left:3613.9px;top:452.5px;width:27.1px;height:13px;background:#78a5d2;"></div>
<div style="left:3613.9px;top:505px;width:27.1px;height:12.8px;background:#b8a030;"></div>
<div style="left:3613.9px;top:609.5px;width:27.1px;height:26.3px;background:#b8a030;"></div>
<div style="left:3555.5px;top:374.5px;width:28.2px;height:12.5px;background:#306ec8;"></div>
<div style="left:3555.5px;top:413.1px;width:28.2px;height:12.9px;background:#306ec8;"></div>
<div style="left:3555.5px;top:518.5px;width:28.2px;height:12.5px;background:#309446;"></div>
<div style="left:3555.5px;top:544px;width:28.2px;height:12.9px;background:#309446;"></div>
<div style="left:3555.5px;top:571.3px;width:28.2px;height:78.1px;background:#309446;"></div>
<div style="left:3555.5px;top:676.6px;width:28.2px;height:12.7px;background:#309446;"></div>
<div style="left:3555.5px;top:728.4px;width:28.2px;height:12.6px;background:#309446;"></div>
<div style="left:3555.5px;top:781.9px;width:28.2px;height:11.9px;background:#309446;"></div>
<div style="left:3555.5px;top:846.4px;width:28.2px;height:39.9px;background:#08a01c;"></div>
<div style="left:3555.5px;top:648.3px;width:85.5px;height:2.6px;background:#8e8f96;"></div>
<div style="left:907px;top:1386.3px;width:2734px;height:2.2px;background:#353846;"></div>
<div style="left:942.3px;top:1407.56px;height:26px;line-height:26px;font-family:'Liberation Sans', sans-serif;font-size:18.6px;color:#8b8d97;white-space:pre;letter-spacing:-1.204px;">PROBLEMS</div>
<div style="left:1071.3px;top:1407.56px;height:26px;line-height:26px;font-family:'Liberation Sans', sans-serif;font-size:18.6px;color:#8b8d97;white-space:pre;letter-spacing:-0.856px;">OUTPUT</div>
<div style="left:1178.3px;top:1407.56px;height:26px;line-height:26px;font-family:'Liberation Sans', sans-serif;font-size:18.6px;color:#8b8d97;white-space:pre;letter-spacing:-0.994px;">DEBUG CONSOLE</div>
<div style="left:1363.2px;top:1407.56px;height:26px;line-height:26px;font-family:'Liberation Sans', sans-serif;font-size:18.6px;color:#ececec;white-space:pre;letter-spacing:-0.627px;">TERMINAL</div>
<div style="left:1363px;top:1442.3px;width:89.5px;height:1.9px;background:#e4e4e4;"></div>
<div style="left:3033.8px;top:1397.7px;width:296.8px;height:41.9px;background:#3c3c3c;"></div>
<div style="left:3049px;top:1400px;width:239.5px;height:38px;overflow:hidden;"><div style="left:0;top:0;height:38px;line-height:38px;top:2.38px;font-size:22px;color:#f0f0f0;white-space:pre;letter-spacing:0.38px">6: Python Debug Console</div></div>
<svg style="left:3296px;top:1406px;" width="24" height="24" viewBox="0 0 24 24"><path d="M5 8.5 L12 15.5 L19 8.5" stroke="#d0d0d0" stroke-width="1.8" fill="none"/></svg>
<svg style="left:3357px;top:1404.6px;" width="28" height="28" viewBox="0 0 28 28"><path d="M14 3 V25 M3 14 H25" stroke="#d0d0d0" fill="none" stroke-width="2" stroke-linejoin="round"/></svg>
<svg style="left:3415.2px;top:1404.6px;" width="28" height="28" viewBox="0 0 28 28"><rect x="3.5" y="3.5" width="21" height="20" rx="1.5" stroke="#d0d0d0" fill="none" stroke-width="2" stroke-linejoin="round"/><path d="M14 3.5 V23.5" stroke="#d0d0d0" fill="none" stroke-width="2" stroke-linejoin="round"/></svg>
<svg style="left:3469.3px;top:1404.6px;" width="28" height="28" viewBox="0 0 28 28"><path d="M4 7.5 H24 M10 7 V3.5 H18 V7 M6.5 7.5 L7.5 25 H20.5 L21.5 7.5 M11 11 V21.5 M14 11 V21.5 M17 11 V21.5" stroke="#d0d0d0" fill="none" stroke-width="2" stroke-linejoin="round" stroke-width="1.9"/></svg>
<svg style="left:3526.3px;top:1404.6px;" width="28" height="28" viewBox="0 0 28 28"><path d="M4.5 18.5 L14 9 L23.5 18.5" stroke="#d0d0d0" fill="none" stroke-width="2" stroke-linejoin="round"/></svg>
<svg style="left:3582.2px;top:1404.6px;" width="28" height="28" viewBox="0 0 28 28"><path d="M6.5 6.5 L21.5 21.5 M21.5 6.5 L6.5 21.5" stroke="#d0d0d0" fill="none" stroke-width="2" stroke-linejoin="round"/></svg>
<div class="tl" style="top:1470.90px">2020-04-24 10:52:58,630 7784 <span class="tw">WARNING</span> dec_database_8008 odoo.addons.base.models.ir_module: module purchase_stock_archive: description is empty !</div>
<div class="tl" style="top:1495.85px">2020-04-24 10:52:58,667 7784 <span class="ti">INFO</span> dec_database_8008 odoo.addons.base.models.ir_translation: module purchase_stock_archive: no translation for language fr</div>
<div class="tl" style="top:1520.80px">2020-04-24 10:52:59,635 7784 <span class="ti">INFO</span> ? odoo.http: HTTP Configuring static files</div>
<div class="tl" style="top:1545.75px">2020-04-24 10:52:59,715 7784 <span class="ti">INFO</span> dec_database_8008 odoo.modules.loading: 138 modules loaded in 8.15s, 10 queries</div>
<div class="tl" style="top:1570.70px">2020-04-24 10:53:01,758 7784 <span class="tw">WARNING</span> dec_database_8008 odoo.modules.loading: The model res.partner.academy has no access rules, consider adding one. E.g. access_res_partner_academy,access_res_partner_academy,model_res</div>
<div class="tl" style="top:1595.65px">_partner_academy,base.group_user,1,0,0,0</div>
<div class="tl" style="top:1620.60px">2020-04-24 10:53:02,063 7784 <span class="ti">INFO</span> dec_database_8008 odoo.modules.registry: verifying fields for every extended model</div>
<div class="tl" style="top:1645.55px">2020-04-24 10:53:02,847 7784 <span class="te">ERROR</span> dec_database_8008 odoo.tools.view_validation: &lt;string&gt;:0:0:ERROR:RELAXNGV:RELAXNG_ERR_ATTRVALID: Element filter failed to validate attributes</div>
<div class="tl" style="top:1670.50px">2020-04-24 10:53:02,847 7784 <span class="te">ERROR</span> dec_database_8008 odoo.tools.view_validation: &lt;string&gt;:12:0:ERROR:RELAXNGV:RELAXNG_ERR_NOELEM: Expecting an element field, got nothing</div>
<div class="tl" style="top:1695.45px">2020-04-24 10:53:02,847 7784 <span class="te">ERROR</span> dec_database_8008 odoo.tools.view_validation: &lt;string&gt;:12:0:ERROR:RELAXNGV:RELAXNG_ERR_EXTRACONTENT: Element group has extra content: filter</div>
<div class="tl" style="top:1720.40px">2020-04-24 10:53:02,848 7784 <span class="te">ERROR</span> dec_database_8008 odoo.tools.view_validation: &lt;string&gt;:2:0:ERROR:RELAXNGV:RELAXNG_ERR_EXTRACONTENT: Element search has extra content: group</div>
<div class="tl" style="top:1745.35px">2020-04-24 10:53:02,848 7784 <span class="te">ERROR</span> dec_database_8008 odoo.tools.view_validation: Invalid XML:  Get RNG validator and validate RNG file.</div>
<div class="tl" style="top:1770.30px">2020-04-24 10:53:02,853 7784 <span class="tw">WARNING</span> dec_database_8008 odoo.modules.loading: invalid custom view(s) for model ref.log: Définition de vue ref.log.search non conforme dans False</div>
<div class="tl" style="top:1795.25px">None</div>
<div class="tl" style="top:1820.20px">2020-04-24 10:53:02,956 7784 <span class="te">ERROR</span> dec_database_8008 odoo.tools.view_validation: &lt;string&gt;:0:0:ERROR:RELAXNGV:RELAXNG_ERR_ATTRVALID: Element filter failed to validate attributes</div>
<div class="tl" style="top:1845.15px">2020-04-24 10:53:02,957 7784 <span class="te">ERROR</span> dec_database_8008 odoo.tools.view_validation: &lt;string&gt;:14:0:ERROR:RELAXNGV:RELAXNG_ERR_NOELEM: Expecting an element field, got nothing</div>
<div class="tl" style="top:1870.10px">2020-04-24 10:53:02,957 7784 <span class="te">ERROR</span> dec_database_8008 odoo.tools.view_validation: &lt;string&gt;:14:0:ERROR:RELAXNGV:RELAXNG_ERR_EXTRACONTENT: Element group has extra content: filter</div>
<div class="tl" style="top:1895.05px">2020-04-24 10:53:02,957 7784 <span class="te">ERROR</span> dec_database_8008 odoo.tools.view_validation: &lt;string&gt;:2:0:ERROR:RELAXNGV:RELAXNG_ERR_EXTRACONTENT: Element search has extra content: group</div>
<div class="tl" style="top:1920.00px">2020-04-24 10:53:02,957 7784 <span class="te">ERROR</span> dec_database_8008 odoo.tools.view_validation: Invalid XML:  Get RNG validator and validate RNG file.</div>
<div class="tl" style="top:1944.95px">2020-04-24 10:53:02,958 7784 <span class="tw">WARNING</span> dec_database_8008 odoo.modules.loading: invalid custom view(s) for model software.account: Définition de vue software.account.search non conforme dans False</div>
<div class="tl" style="top:1969.90px">None</div>
<div class="tl" style="top:1994.85px">2020-04-24 10:53:02,981 7784 <span class="ti">INFO</span> dec_database_8008 odoo.modules.loading: Modules loaded.</div>
<div class="tl" style="top:2019.80px">2020-04-24 10:53:03,015 7784 <span class="ti">INFO</span> dec_database_8008 odoo.addons.base.models.ir_http: Generating routing map</div>
<div class="tl" style="top:2044.75px">2020-04-24 10:53:03,623 7784 <span class="ti">INFO</span> ? odoo.addons.bus.models.bus: Bus.loop listen imbus on db postgres</div>
<div class="tl" style="top:2069.70px">2020-04-24 10:53:16,718 7784 <span class="ti">INFO</span> ? werkzeug: 127.0.0.1 - - [24/Apr/2020 10:53:16] "GET /web/static/src/img/spin.png HTTP/1.1" 200 - - - -</div>
<div style="left:943.5px;top:2096.4px;width:11.5px;height:22.6px;border:1.5px solid #c8c8c8;"></div>
<svg style="left:19px;top:2131px;" width="20" height="24" viewBox="0 0 20 24"><path d="M2.5 11 L8 16.5 L2.5 22 M17 2 L11.5 7.5 L17 13" stroke="#ffffff" fill="none" stroke-width="1.8" stroke-linecap="round" stroke-linejoin="round"/></svg>
<div style="left:47.1px;top:2129.97px;height:28px;line-height:28px;font-family:'Liberation Sans', sans-serif;font-size:20.3px;color:#ffffff;white-space:pre;letter-spacing:-0.010px;">SSH: bamako.decindustrie.com</div>
<svg style="left:364px;top:2130px;" width="24" height="26" viewBox="0 0 24 26"><circle cx="6.5" cy="5" r="2.8" stroke="#ffffff" fill="none" stroke-width="1.8" stroke-linecap="round" stroke-linejoin="round"/><circle cx="6.5" cy="21" r="2.8" stroke="#ffffff" fill="none" stroke-width="1.8" stroke-linecap="round" stroke-linejoin="round"/><circle cx="17.5" cy="8" r="2.8" stroke="#ffffff" fill="none" stroke-width="1.8" stroke-linecap="round" stroke-linejoin="round"/><path d="M6.5 8 V18 M17.5 11 C17.5 15 9 14 6.5 18" stroke="#ffffff" fill="none" stroke-width="1.8" stroke-linecap="round" stroke-linejoin="round"/></svg>
<div style="left:395.3px;top:2129.97px;height:28px;line-height:28px;font-family:'Liberation Sans', sans-serif;font-size:20.3px;color:#ffffff;white-space:pre;letter-spacing:-0.515px;">12.0*</div>
<svg style="left:469px;top:2131px;" width="26" height="24" viewBox="0 0 26 24"><path d="M4 12 A9 9 0 0 1 20 6.5 M22 12 A9 9 0 0 1 6 17.5" stroke="#ffffff" fill="none" stroke-width="1.8" stroke-linecap="round" stroke-linejoin="round"/><path d="M20.5 1.5 V7 H15 M5.5 22.5 V17 H11" stroke="#ffffff" fill="none" stroke-width="1.8" stroke-linecap="round" stroke-linejoin="round"/></svg>
<div style="left:499px;top:2129.97px;height:28px;line-height:28px;font-family:'Liberation Sans', sans-serif;font-size:20.3px;color:#ffffff;white-space:pre;letter-spacing:-0.137px;">0↓ 1↑</div>
<div style="left:576.2px;top:2129.97px;height:28px;line-height:28px;font-family:'Liberation Sans', sans-serif;font-size:20.3px;color:#ffffff;white-space:pre;letter-spacing:0.160px;">Python 3.6.10 64-bit ('.venv': virtualenv)</div>
<svg style="left:966px;top:2131px;" width="25" height="25" viewBox="0 0 25 25"><circle cx="12.3" cy="12.5" r="10" stroke="#ffffff" fill="none" stroke-width="1.8" stroke-linecap="round" stroke-linejoin="round"/><path d="M8 8.2 L16.6 16.8 M16.6 8.2 L8 16.8" stroke="#ffffff" fill="none" stroke-width="1.8" stroke-linecap="round" stroke-linejoin="round"/></svg>
<div style="left:996.3px;top:2129.97px;height:28px;line-height:28px;font-family:'Liberation Sans', sans-serif;font-size:20.3px;color:#ffffff;white-space:pre;letter-spacing:-0.081px;">0</div>
<svg style="left:1014px;top:2131px;" width="25" height="25" viewBox="0 0 25 25"><path d="M12 3 L22.5 21.5 H1.5 Z" stroke="#ffffff" fill="none" stroke-width="1.8" stroke-linecap="round" stroke-linejoin="round"/><path d="M12 9.5 V15.5 M12 18 V18.6" stroke="#ffffff" fill="none" stroke-width="1.8" stroke-linecap="round" stroke-linejoin="round"/></svg>
<div style="left:1044.5px;top:2129.97px;height:28px;line-height:28px;font-family:'Liberation Sans', sans-serif;font-size:20.3px;color:#ffffff;white-space:pre;letter-spacing:-1.181px;">13</div>
<svg style="left:1072px;top:2131px;" width="25" height="25" viewBox="0 0 25 25"><circle cx="12.3" cy="12.5" r="10" stroke="#ffffff" fill="none" stroke-width="1.8" stroke-linecap="round" stroke-linejoin="round"/><path d="M12.3 11.5 V17.5 M12.3 7.6 V8.2" stroke="#ffffff" fill="none" stroke-width="1.8" stroke-linecap="round" stroke-linejoin="round"/></svg>
<div style="left:1103px;top:2129.97px;height:28px;line-height:28px;font-family:'Liberation Sans', sans-serif;font-size:20.3px;color:#ffffff;white-space:pre;letter-spacing:-0.631px;">27</div>
<svg style="left:1156px;top:2132px;" width="20" height="24" viewBox="0 0 20 24"><path d="M3.5 3 L15.5 11.5 L3.5 20 Z" stroke="#ffffff" fill="none" stroke-width="1.8" stroke-linecap="round" stroke-linejoin="round"/></svg>
<div style="left:1183.9px;top:2129.97px;height:28px;line-height:28px;font-family:'Liberation Sans', sans-serif;font-size:20.3px;color:#ffffff;white-space:pre;letter-spacing:-0.002px;">Debug 8008 (12.0)</div>
<div style="left:1381.7px;top:2129.97px;height:28px;line-height:28px;font-family:'Liberation Sans', sans-serif;font-size:20.3px;color:#ffffff;white-space:pre;letter-spacing:-0.534px;">2.46 KiB</div>
<div style="left:1483.5px;top:2129.97px;height:28px;line-height:28px;font-family:'Liberation Sans', sans-serif;font-size:20.3px;color:#ffffff;white-space:pre;letter-spacing:0.028px;">3 Words, 51 Chars, 2 Lines, 1 Paragraph, ~0m1s reading time</div>
<svg style="left:2078px;top:2130px;" width="25" height="26" viewBox="0 0 25 26"><ellipse cx="12" cy="14.5" rx="5.6" ry="7.2" stroke="#ffffff" fill="none" stroke-width="1.8" stroke-linecap="round" stroke-linejoin="round"/><path d="M7.5 8.5 L4 5 M16.5 8.5 L20 5 M6.4 14.5 H1.5 M17.6 14.5 H22.5 M7.5 20 L4 23.5 M16.5 20 L20 23.5 M8 9.5 C9 5.5 15 5.5 16 9.5" stroke="#ffffff" fill="none" stroke-width="1.8" stroke-linecap="round" stroke-linejoin="round"/></svg>
<div style="left:2108.9px;top:2129.97px;height:28px;line-height:28px;font-family:'Liberation Sans', sans-serif;font-size:20.3px;color:#ffffff;white-space:pre;letter-spacing:0.087px;">Debug 8008</div>
<svg style="left:2248px;top:2133px;" width="20" height="20" viewBox="0 0 20 20"><rect x="2.5" y="2" width="3.4" height="16" fill="#ffffff"/><rect x="12.6" y="2" width="3.4" height="16" fill="#ffffff"/></svg>
<svg style="left:2302px;top:2132px;" width="18" height="22" viewBox="0 0 18 22"><path d="M3 2.5 L14.5 11 L3 19.5 Z" fill="#ffffff"/></svg>
<svg style="left:2355px;top:2132px;" width="24" height="22" viewBox="0 0 24 22"><path d="M2 11 H21 M14 4 L21 11 L14 18" stroke="#ffffff" fill="none" stroke-width="1.8" stroke-linecap="round" stroke-linejoin="round"/></svg>
<svg style="left:2408px;top:2131px;" width="24" height="24" viewBox="0 0 24 24"><path d="M12 2.5 V21 M5 14 L12 21 L19 14" stroke="#ffffff" fill="none" stroke-width="1.8" stroke-linecap="round" stroke-linejoin="round"/></svg>
<svg style="left:2460px;top:2131px;" width="24" height="24" viewBox="0 0 24 24"><path d="M12 21.5 V3 M5 10 L12 3 L19 10" stroke="#ffffff" fill="none" stroke-width="1.8" stroke-linecap="round" stroke-linejoin="round"/></svg>
<svg style="left:2511px;top:2131px;" width="26" height="24" viewBox="0 0 26 24"><path d="M3 9 H14 C20 9 22 13 22 17 V21.5 M9 3 L3 9 L9 15" stroke="#ffffff" fill="none" stroke-width="1.8" stroke-linecap="round" stroke-linejoin="round"/></svg>
<svg style="left:2568px;top:2135px;" width="16" height="16" viewBox="0 0 16 16"><rect x="1.8" y="1.8" width="12.4" height="12.4" stroke="#ffffff" fill="none" stroke-width="1.8" stroke-linecap="round" stroke-linejoin="round"/></svg>
<svg style="left:2856px;top:2129px;" width="18" height="28" viewBox="0 0 18 28"><circle cx="8.3" cy="13" r="4.6" stroke="#ffffff" fill="none" stroke-width="1.8" stroke-linecap="round" stroke-linejoin="round"/><path d="M8.3 2.5 V8.4 M8.3 17.6 V25" stroke="#ffffff" fill="none" stroke-width="1.8" stroke-linecap="round" stroke-linejoin="round"/></svg>
<div style="left:2881.9px;top:2129.97px;height:28px;line-height:28px;font-family:'Liberation Sans', sans-serif;font-size:20.3px;color:#ffffff;white-space:pre;letter-spacing:-0.095px;">You, 22 days ago</div>
<div style="left:3065.8px;top:2129.97px;height:28px;line-height:28px;font-family:'Liberation Sans', sans-serif;font-size:20.3px;color:#ffffff;white-space:pre;letter-spacing:-0.290px;">Ln 37, Col 1</div>
<div style="left:3201.1px;top:2129.97px;height:28px;line-height:28px;font-family:'Liberation Sans', sans-serif;font-size:20.3px;color:#ffffff;white-space:pre;letter-spacing:-0.656px;">Spaces: 4</div>
<div style="left:3314.1px;top:2129.97px;height:28px;line-height:28px;font-family:'Liberation Sans', sans-serif;font-size:20.3px;color:#ffffff;white-space:pre;letter-spacing:-0.454px;">UTF-8</div>
<div style="left:3398px;top:2129.97px;height:28px;line-height:28px;font-family:'Liberation Sans', sans-serif;font-size:20.3px;color:#ffffff;white-space:pre;letter-spacing:-2.286px;">LF</div>
<div style="left:3446.5px;top:2129.97px;height:28px;line-height:28px;font-family:'Liberation Sans', sans-serif;font-size:20.3px;color:#ffffff;white-space:pre;letter-spacing:0.024px;">Python</div>
<svg style="left:3539px;top:2130px;" width="26" height="26" viewBox="0 0 26 26"><circle cx="9" cy="10.5" r="4" stroke="#ffffff" fill="none" stroke-width="1.8" stroke-linecap="round" stroke-linejoin="round"/><path d="M2 23.5 C2 18 5.5 16 9 16 C12.5 16 16 18 16 23.5 M13 3 H23.5 V11.5 H19.5 L16.5 14.5 V11.5" stroke="#ffffff" fill="none" stroke-width="1.8" stroke-linecap="round" stroke-linejoin="round"/></svg>
<svg style="left:3591px;top:2130px;" width="26" height="26" viewBox="0 0 26 26"><path d="M5 19.5 H21 C18.5 17 19 14 19 10.5 C19 6 16 3.5 13 3.5 C10 3.5 7 6 7 10.5 C7 14 7.5 17 5 19.5 Z M10.5 22.5 C11 24 15 24 15.5 22.5" stroke="#ffffff" fill="none" stroke-width="1.8" stroke-linecap="round" stroke-linejoin="round"/></svg>
</body></html>
